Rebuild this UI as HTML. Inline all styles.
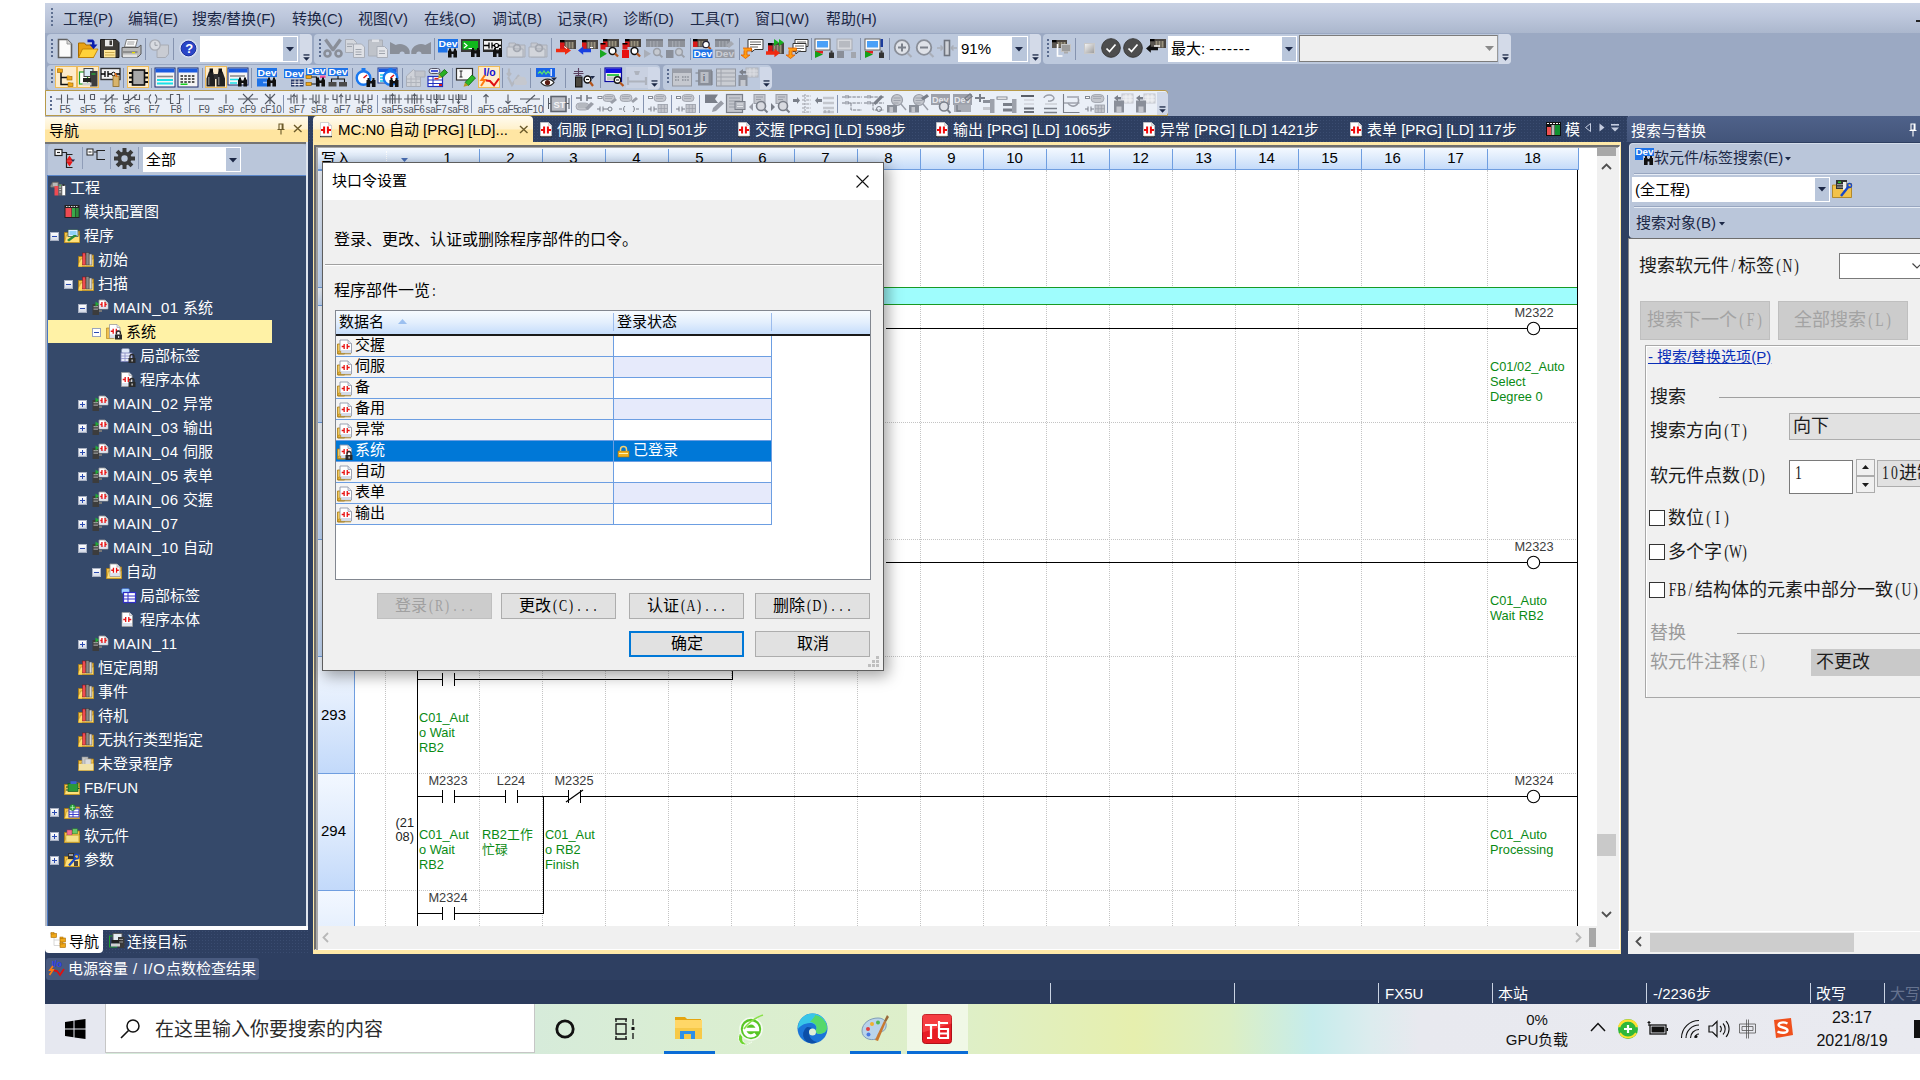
<!DOCTYPE html>
<html lang="zh-CN"><head><meta charset="utf-8"><title>GX Works3</title>
<style>
*{box-sizing:border-box;margin:0;padding:0}
html,body{width:1920px;height:1080px;overflow:hidden;background:#fff}
body{position:relative;font-family:"Liberation Sans",sans-serif;font-size:15px;color:#000}
div,svg,span.a{position:absolute}
svg{overflow:visible}
.sf{font-family:"Liberation Sans",serif;font-weight:300}
.sf .h{font-family:"Liberation Serif",serif}
.h{display:inline-flex;justify-content:center;transform:scaleX(.76)}
.ls{letter-spacing:.43px}
.tb{background:#bdc9dd;border-radius:4px}
.sep{background:#8e9cb8;width:1px}
</style></head>
<body>
<div style="left:45px;top:3px;width:1875px;height:1001px;background:#9ba9c3"></div>
<div style="left:45px;top:3px;width:1875px;height:30px;background:linear-gradient(#c9d2e4 0%,#bdc7dc 45%,#abb7cd 100%)"></div>
<div style="left:51px;top:8px;width:2px;height:2px;background:#5f7091"></div>
<div style="left:51px;top:12px;width:2px;height:2px;background:#5f7091"></div>
<div style="left:51px;top:16px;width:2px;height:2px;background:#5f7091"></div>
<div style="left:51px;top:20px;width:2px;height:2px;background:#5f7091"></div>
<div style="left:51px;top:24px;width:2px;height:2px;background:#5f7091"></div>
<div style="left:63px;top:9px;height:20px;line-height:20px;font-size:15px;color:#1c2846;white-space:nowrap;">工程(P)</div>
<div style="left:128px;top:9px;height:20px;line-height:20px;font-size:15px;color:#1c2846;white-space:nowrap;">编辑(E)</div>
<div style="left:192px;top:9px;height:20px;line-height:20px;font-size:15px;color:#1c2846;white-space:nowrap;">搜索/替换(F)</div>
<div style="left:292px;top:9px;height:20px;line-height:20px;font-size:15px;color:#1c2846;white-space:nowrap;">转换(C)</div>
<div style="left:358px;top:9px;height:20px;line-height:20px;font-size:15px;color:#1c2846;white-space:nowrap;">视图(V)</div>
<div style="left:424px;top:9px;height:20px;line-height:20px;font-size:15px;color:#1c2846;white-space:nowrap;">在线(O)</div>
<div style="left:492px;top:9px;height:20px;line-height:20px;font-size:15px;color:#1c2846;white-space:nowrap;">调试(B)</div>
<div style="left:557px;top:9px;height:20px;line-height:20px;font-size:15px;color:#1c2846;white-space:nowrap;">记录(R)</div>
<div style="left:623px;top:9px;height:20px;line-height:20px;font-size:15px;color:#1c2846;white-space:nowrap;">诊断(D)</div>
<div style="left:690px;top:9px;height:20px;line-height:20px;font-size:15px;color:#1c2846;white-space:nowrap;">工具(T)</div>
<div style="left:755px;top:9px;height:20px;line-height:20px;font-size:15px;color:#1c2846;white-space:nowrap;">窗口(W)</div>
<div style="left:826px;top:9px;height:20px;line-height:20px;font-size:15px;color:#1c2846;white-space:nowrap;">帮助(H)</div>
<div style="left:1916px;top:20px;width:4px;height:2px;background:#222"></div>
<div class="tb" style="left:47px;top:34px;width:265px;height:30px;"></div>
<div class="tb" style="left:314px;top:34px;width:727px;height:30px;"></div>
<div class="tb" style="left:1043px;top:34px;width:468px;height:30px;"></div>
<div style="left:51px;top:39px;width:2px;height:2px;background:#5a6b8e"></div>
<div style="left:51px;top:43px;width:2px;height:2px;background:#5a6b8e"></div>
<div style="left:51px;top:47px;width:2px;height:2px;background:#5a6b8e"></div>
<div style="left:51px;top:51px;width:2px;height:2px;background:#5a6b8e"></div>
<div style="left:51px;top:55px;width:2px;height:2px;background:#5a6b8e"></div>
<svg style="left:58px;top:39px;" width="14" height="19" viewBox="0 0 14 19"><path d="M0.5 0.5h8.5l4.5 4.5v13.5h-13z" fill="#fbfbfb" stroke="#5f5f5f" stroke-width="1.6" /><path d="M9 0.5v4.5h4.5" fill="#d8d8d8" stroke="#8a8a8a" stroke-width="0.8" /></svg>
<svg style="left:78px;top:39px;" width="21" height="19" viewBox="0 0 21 19"><path d="M0.5 4h6l1.5 2h7.5v12.5h-15z" fill="#e9a213" stroke="#a86a00" stroke-width="1" /><path d="M0.5 18.5l4-8.5h15.5l-4.5 8.5z" fill="#ffd23a" stroke="#b87800" stroke-width="0.8" /><path d="M9.5 0.5h5.5l1.5 2v3h3l-4 4.5l-4-4.5h2.5v-2.2h-4.5z" fill="#0a1fb0" stroke="none" stroke-width="1" /></svg>
<svg style="left:100px;top:39px;" width="20" height="19" viewBox="0 0 20 19"><path d="M0.5 0.5h15.5l3 3v15h-18.5z" fill="#3d3a36" stroke="#1a1a1a" stroke-width="1" /><rect x="5" y="0.8" width="8" height="6.5" fill="#e8e8e8" /><rect x="9.5" y="1.5" width="2.5" height="4.5" fill="#3d3a36" /><rect x="4" y="11" width="11.5" height="7.5" fill="#ffe79a" /><rect x="5" y="13" width="9.5" height="1" fill="#c9a94e" /><rect x="5" y="15.5" width="9.5" height="1" fill="#c9a94e" /></svg>
<svg style="left:121px;top:39px;" width="22" height="19" viewBox="0 0 22 19"><path d="M5.5 0.5h11l-2 7.5h-11z" fill="#fafafa" stroke="#777" stroke-width="1" /><path d="M6.5 3h7M6 5h7" fill="none" stroke="#888" stroke-width="0.8" /><path d="M1 8.5h16l3-2.5v9l-3 3h-16z" fill="#b9b9b9" stroke="#5a5a5a" stroke-width="1" /><rect x="1.5" y="12" width="15" height="2" fill="#8e8e8e" /><rect x="2" y="15.5" width="14" height="2.5" fill="#e2e2e2" /><rect x="11" y="13" width="3" height="1.3" fill="#e6e000" /></svg>
<div style="left:145px;top:38px;width:1px;height:22px;background:#8593af"></div>
<svg style="left:149px;top:39px;" width="21" height="19" viewBox="0 0 21 19"><path d="M8 6h11.5v9l-3 3.5h-8.5z" fill="#c9ccd3" stroke="#a7abb4" stroke-width="1" /><circle cx="6" cy="6" r="5.2" fill="#d8dbe1" stroke="#a7abb4" stroke-width="1.3"/><path d="M6 3v3.3h2.6" fill="none" stroke="#9a9ea7" stroke-width="1" /></svg>
<div style="left:173px;top:38px;width:1px;height:22px;background:#8593af"></div>
<svg style="left:179px;top:39px;" width="19" height="19" viewBox="0 0 19 19"><circle cx="9.5" cy="9.5" r="9" fill="#e9eef8" stroke="#cfd8ea" stroke-width="1"/><circle cx="9.5" cy="9.5" r="7.4" fill="#2a45c8" stroke="#1a2f9a" stroke-width="1"/><text x="6.2" y="14.2" font-family="Liberation Sans,sans-serif" font-size="13" fill="#fff" font-weight="bold">?</text></svg>
<div style="left:200px;top:36px;width:98px;height:26px;background:#fff"></div>
<div style="left:283px;top:37px;width:14px;height:24px;background:#b9c6db"></div>
<svg style="left:286px;top:47px;" width="8" height="5" viewBox="0 0 8 5"><path d="M0 0h8l-4 4.6z" fill="#1c2846" stroke="none" stroke-width="1" /></svg>
<div style="left:300px;top:34px;width:12px;height:30px;background:#d3dae8;border-radius:0 4px 4px 0"></div>
<svg style="left:302px;top:54px;" width="9" height="8" viewBox="0 0 9 8"><rect x="1.5" y="0.3" width="6" height="1.3" fill="#1c2846" /><path d="M1.2 3.2h6.600l-3.300 3.600z" fill="#1c2846" stroke="none" stroke-width="1" /></svg>
<div style="left:319px;top:39px;width:2px;height:2px;background:#5a6b8e"></div>
<div style="left:319px;top:43px;width:2px;height:2px;background:#5a6b8e"></div>
<div style="left:319px;top:47px;width:2px;height:2px;background:#5a6b8e"></div>
<div style="left:319px;top:51px;width:2px;height:2px;background:#5a6b8e"></div>
<div style="left:319px;top:55px;width:2px;height:2px;background:#5a6b8e"></div>
<svg style="left:323px;top:39px;" width="20" height="19" viewBox="0 0 20 19"><path d="M2.500 0.500l8 11M17.500 0.500l-8 11" fill="none" stroke="#8a8f99" stroke-width="3.4" /><circle cx="4.5" cy="14.5" r="3" fill="none" stroke="#8a8f99" stroke-width="2.6"/><circle cx="15.5" cy="14.5" r="3" fill="none" stroke="#8a8f99" stroke-width="2.6"/></svg>
<svg style="left:345px;top:39px;" width="21" height="19" viewBox="0 0 21 19"><path d="M0.5 0.5h8l3 3v10h-11z" fill="#d4d7dd" stroke="#a9aeb8" stroke-width="1" /><path d="M8.5 5h8l3 3v10.5h-11z" fill="#dfe1e6" stroke="#a9aeb8" stroke-width="1" /><path d="M2 5h6M2 7.5h5M10.5 10.5h6M10.5 13h6M10.5 15.5h6" fill="none" stroke="#9fa4ad" stroke-width="1" /></svg>
<svg style="left:368px;top:39px;" width="21" height="19" viewBox="0 0 21 19"><path d="M0.5 1h14v16h-14z" fill="#bfc3ca" stroke="#a9aeb8" stroke-width="1" /><rect x="4" y="0.5" width="7" height="2.5" fill="#e0e2e7" /><path d="M9 7.5h7.5l3 3v8h-10.5z" fill="#e2e4e9" stroke="#a9aeb8" stroke-width="1" /><path d="M11 12h6M11 14.5h6" fill="none" stroke="#9fa4ad" stroke-width="1" /></svg>
<svg style="left:390px;top:39px;" width="20" height="19" viewBox="0 0 20 19"><path d="M0 3l0 12h9.5a2.6 2.6 0 0 1 5.2 0h5v-3a10 9 0 0 0 -14 -6z" fill="#8a8f99" stroke="none" stroke-width="1" /></svg>
<svg style="left:411px;top:39px;" width="20" height="19" viewBox="0 0 20 19"><path d="M20 3l0 12h-9.5a2.6 2.6 0 0 0 -5.2 0h-5v-3a10 9 0 0 1 14 -6z" fill="#8a8f99" stroke="none" stroke-width="1" /></svg>
<div style="left:434px;top:38px;width:1px;height:22px;background:#8593af"></div>
<svg style="left:438px;top:39px;" width="21" height="19" viewBox="0 0 21 19"><rect x="0" y="0" width="20" height="9" fill="#1e73e8" /><text x="0.5" y="7.5" font-family="Liberation Sans,sans-serif" font-size="8.5" fill="#fff" font-weight="bold" textLength="19" lengthAdjust="spacingAndGlyphs">Dev</text><rect x="0" y="9" width="9.5" height="4.5" fill="#1e73e8" /><rect x="10" y="11.5" width="3.6" height="7" fill="#111" /><rect x="15.4" y="11.5" width="3.6" height="7" fill="#111" /><rect x="11" y="9.5" width="2" height="3" fill="#111" /><rect x="16" y="9.5" width="2" height="3" fill="#111" /><rect x="13" y="12.5" width="3" height="2.5" fill="#111" /></svg>
<svg style="left:461px;top:39px;" width="21" height="19" viewBox="0 0 21 19"><rect x="0" y="0" width="19" height="13" fill="#3a3a3a" /><rect x="1.5" y="2" width="15.5" height="8.5" fill="#10b81c" /><path d="M3 4l3 2.5l-3 2.5M7.5 9.5h4" fill="none" stroke="#fff" stroke-width="1.2" /><rect x="10" y="11" width="3.6" height="7" fill="#111" /><rect x="15.4" y="11" width="3.6" height="7" fill="#111" /><rect x="11" y="9" width="2" height="3" fill="#111" /><rect x="16" y="9" width="2" height="3" fill="#111" /><rect x="13" y="12" width="3" height="2.5" fill="#111" /></svg>
<svg style="left:483px;top:39px;" width="21" height="19" viewBox="0 0 21 19"><rect x="0" y="0" width="19" height="13" fill="#2a2a2a" /><rect x="1" y="2" width="17" height="8.5" fill="#f2f2f2" /><path d="M1 6.5h5M6 3.5v6M9 3.5v6M9 6.5h3M16 6.5h2" fill="none" stroke="#000" stroke-width="1.3" /><circle cx="13.5" cy="6.5" r="2" fill="#fff" stroke="#000" stroke-width="1.2"/><rect x="10" y="11" width="3.6" height="7" fill="#111" /><rect x="15.4" y="11" width="3.6" height="7" fill="#111" /><rect x="11" y="9" width="2" height="3" fill="#111" /><rect x="16" y="9" width="2" height="3" fill="#111" /><rect x="13" y="12" width="3" height="2.5" fill="#111" /></svg>
<svg style="left:506px;top:39px;" width="21" height="19" viewBox="0 0 21 19"><path d="M3 4h6l2 2h8v12h-16z" fill="#c6c9d0" stroke="#a9aeb8" stroke-width="1" /><path d="M1 8h6l2 2h8v8h-16z" fill="#d2d5db" stroke="#a9aeb8" stroke-width="1" /><circle cx="11" cy="9" r="3.4" fill="none" stroke="#a3a7b0" stroke-width="1.8"/></svg>
<svg style="left:528px;top:39px;" width="21" height="19" viewBox="0 0 21 19"><path d="M3 4h6l2 2h8v12h-16z" fill="#c6c9d0" stroke="#a9aeb8" stroke-width="1" /><path d="M1 8h6l2 2h8v8h-16z" fill="#d2d5db" stroke="#a9aeb8" stroke-width="1" /><circle cx="11" cy="9" r="3.4" fill="none" stroke="#a3a7b0" stroke-width="1.8"/></svg>
<div style="left:551px;top:38px;width:1px;height:22px;background:#8593af"></div>
<svg style="left:556px;top:39px;" width="21" height="19" viewBox="0 0 21 19"><rect x="4" y="1" width="16" height="9" fill="#4a4540" /><rect x="4" y="1" width="4.5" height="2.5" fill="#000" /><rect x="4" y="3.5" width="4.5" height="6.5" fill="#d81818" /><rect x="9.5" y="3" width="2" height="6.5" fill="#9a937f" /><rect x="12.5" y="3" width="2" height="6.5" fill="#9a937f" /><rect x="15.5" y="3" width="2" height="6.5" fill="#9a937f" /><path d="M0 9.74h9.0v-2.4l6.0 4.16l-6.0 4.16v-2.4h-9.0z" fill="#f02a10" stroke="none" stroke-width="1" /><path d="M8 7.5l3 2.2" fill="none" stroke="#fff" stroke-width="1" /></svg>
<svg style="left:578px;top:39px;" width="21" height="19" viewBox="0 0 21 19"><rect x="4" y="1" width="16" height="9" fill="#4a4540" /><rect x="4" y="1" width="4.5" height="2.5" fill="#000" /><rect x="4" y="3.5" width="4.5" height="6.5" fill="#d81818" /><rect x="9.5" y="3" width="2" height="6.5" fill="#9a937f" /><rect x="12.5" y="3" width="2" height="6.5" fill="#9a937f" /><rect x="15.5" y="3" width="2" height="6.5" fill="#9a937f" /><path d="M13 9.74h-7.8v-2.4l-5.2 4.16l5.2 4.16v-2.4h7.8z" fill="#1840e0" stroke="none" stroke-width="1" /><path d="M12 8.5h3" fill="none" stroke="#fff" stroke-width="1" /></svg>
<svg style="left:600px;top:39px;" width="21" height="19" viewBox="0 0 21 19"><rect x="3" y="0" width="16" height="8" fill="#4a4540" /><rect x="3" y="0" width="4.5" height="2.5" fill="#000" /><rect x="3" y="2.5" width="4.5" height="5.5" fill="#d81818" /><rect x="8.5" y="2" width="2" height="5.5" fill="#9a937f" /><rect x="11.5" y="2" width="2" height="5.5" fill="#9a937f" /><rect x="14.5" y="2" width="2" height="5.5" fill="#9a937f" /><rect x="0.5" y="4.5" width="5" height="6" fill="#d81818" /><rect x="0.5" y="4" width="5" height="1.5" fill="#000" /><path d="M0 10.5v8.5l7-4.2z" fill="#18a820" stroke="none" stroke-width="1" /><circle cx="12.5" cy="12" r="3.4" fill="#fff" stroke="#111" stroke-width="1.5"/><path d="M14.879999999999999 14.379999999999999l3.2 3.2" fill="none" stroke="#b4551c" stroke-width="2.2" /></svg>
<svg style="left:622px;top:39px;" width="21" height="19" viewBox="0 0 21 19"><rect x="3" y="0" width="16" height="8" fill="#4a4540" /><rect x="3" y="0" width="4.5" height="2.5" fill="#000" /><rect x="3" y="2.5" width="4.5" height="5.5" fill="#d81818" /><rect x="8.5" y="2" width="2" height="5.5" fill="#9a937f" /><rect x="11.5" y="2" width="2" height="5.5" fill="#9a937f" /><rect x="14.5" y="2" width="2" height="5.5" fill="#9a937f" /><rect x="0.5" y="4.5" width="5" height="6" fill="#d81818" /><rect x="0.5" y="4" width="5" height="1.5" fill="#000" /><rect x="0" y="11" width="7" height="8" fill="#e81010" /><circle cx="12.5" cy="12" r="3.4" fill="#fff" stroke="#111" stroke-width="1.5"/><path d="M14.879999999999999 14.379999999999999l3.2 3.2" fill="none" stroke="#b4551c" stroke-width="2.2" /></svg>
<svg style="left:644px;top:39px;" width="21" height="19" viewBox="0 0 21 19"><rect x="2" y="0" width="17" height="8" fill="#8d9199" /><rect x="2" y="0" width="17" height="2" fill="#7b7f88" /><rect x="6.0" y="2" width="1.2" height="6" fill="#a4a8b0" /><rect x="9.3" y="2" width="1.2" height="6" fill="#a4a8b0" /><rect x="12.6" y="2" width="1.2" height="6" fill="#a4a8b0" /><path d="M0 10.5v8.5l7-4.2z" fill="#a9aeb8" stroke="none" stroke-width="1" /><circle cx="13" cy="13" r="3.4" fill="#c5c9d0" stroke="#9a9fa8" stroke-width="1.5"/><path d="M15.379999999999999 15.379999999999999l3 3" fill="none" stroke="#9a9fa8" stroke-width="2" /></svg>
<svg style="left:666px;top:39px;" width="21" height="19" viewBox="0 0 21 19"><rect x="2" y="0" width="17" height="8" fill="#8d9199" /><rect x="2" y="0" width="17" height="2" fill="#7b7f88" /><rect x="6.0" y="2" width="1.2" height="6" fill="#a4a8b0" /><rect x="9.3" y="2" width="1.2" height="6" fill="#a4a8b0" /><rect x="12.6" y="2" width="1.2" height="6" fill="#a4a8b0" /><rect x="0" y="11" width="7.5" height="8" fill="#8a8f99" /><circle cx="13" cy="13" r="3.4" fill="#c5c9d0" stroke="#9a9fa8" stroke-width="1.5"/><path d="M15.379999999999999 15.379999999999999l3 3" fill="none" stroke="#9a9fa8" stroke-width="2" /></svg>
<div style="left:690px;top:38px;width:1px;height:22px;background:#8593af"></div>
<svg style="left:693px;top:39px;" width="21" height="19" viewBox="0 0 21 19"><rect x="0" y="0" width="15" height="8" fill="#4a4540" /><rect x="0" y="0" width="4.5" height="2.5" fill="#000" /><rect x="0" y="2.5" width="4.5" height="5.5" fill="#d81818" /><rect x="5.5" y="2" width="2" height="5.5" fill="#9a937f" /><rect x="8.5" y="2" width="2" height="5.5" fill="#9a937f" /><rect x="11.5" y="2" width="2" height="5.5" fill="#9a937f" /><circle cx="13" cy="5.5" r="3.2" fill="#fff" stroke="#223" stroke-width="1.3"/><path d="M15.3 8l2.5 2" fill="none" stroke="#b4551c" stroke-width="2" /><rect x="0" y="10.5" width="19.5" height="8.5" fill="#1e73e8" /><text x="0.5" y="17.5" font-family="Liberation Sans,sans-serif" font-size="8.5" fill="#fff" font-weight="bold" textLength="18.5" lengthAdjust="spacingAndGlyphs">Dev</text></svg>
<svg style="left:715px;top:39px;" width="21" height="19" viewBox="0 0 21 19"><rect x="0" y="0" width="15" height="8" fill="#8d9199" /><rect x="0" y="0" width="15" height="2" fill="#7b7f88" /><rect x="4.0" y="2" width="1.2" height="6" fill="#a4a8b0" /><rect x="7.3" y="2" width="1.2" height="6" fill="#a4a8b0" /><rect x="10.6" y="2" width="1.2" height="6" fill="#a4a8b0" /><path d="M11 6l5-4l3 3l-5 4z" fill="#a5a9b2" stroke="none" stroke-width="1" /><rect x="0" y="10.5" width="19.5" height="8.5" fill="#9599a3" /><text x="0.5" y="17.5" font-family="Liberation Sans,sans-serif" font-size="8.5" fill="#c9ccd3" font-weight="bold" textLength="18.5" lengthAdjust="spacingAndGlyphs">Dev</text></svg>
<div style="left:739px;top:38px;width:1px;height:22px;background:#8593af"></div>
<svg style="left:743px;top:39px;" width="21" height="19" viewBox="0 0 21 19"><path d="M5 0.5h15v10h-8.25l-3 2.5v-2.5h-3.75z" fill="#fff" stroke="#333" stroke-width="1" /><path d="M7 3.0h11M7 5.5h11M7 8.0h8" fill="none" stroke="#555" stroke-width="0.9" /><path d="M0 9h8.5v3h-4.5v4h3l-4.5 3.5l-4.5-3.5h3v-4.5" fill="#ff9c10" stroke="#e05a00" stroke-width="0.8" /></svg>
<svg style="left:766px;top:39px;" width="21" height="19" viewBox="0 0 21 19"><rect x="2" y="4" width="16" height="11" fill="#4a4540" /><rect x="2" y="4" width="4.5" height="2.5" fill="#000" /><rect x="2" y="6.5" width="4.5" height="8.5" fill="#d81818" /><rect x="7.5" y="6" width="2" height="8.5" fill="#9a937f" /><rect x="10.5" y="6" width="2" height="8.5" fill="#9a937f" /><rect x="13.5" y="6" width="2" height="8.5" fill="#9a937f" /><path d="M8 0v7l5-3.5zM13 0v7l5-3.5z" fill="#18b020" stroke="none" stroke-width="1" /><path d="M0 12.24h8.4v-2.4l5.6000000000000005 4.16l-5.6000000000000005 4.16v-2.4h-8.4z" fill="#f02a10" stroke="none" stroke-width="1" /></svg>
<svg style="left:788px;top:39px;" width="21" height="19" viewBox="0 0 21 19"><path d="M7 0.5h13v7h-7.15l-3 2.5v-2.5h-2.8500000000000005z" fill="#fff" stroke="#333" stroke-width="1" /><path d="M9 3.0h9M9 5.5h9M9 8.0h6" fill="none" stroke="#555" stroke-width="0.9" /><path d="M5 4.5h13v8h-7.15l-3 2.5v-2.5h-2.8500000000000005z" fill="#fff" stroke="#333" stroke-width="1" /><path d="M7 7.0h9M7 9.5h9M7 12.0h6" fill="none" stroke="#555" stroke-width="0.9" /><path d="M0 9h8.5v3h-4.5v4h3l-4.5 3.5l-4.5-3.5h3v-4.5" fill="#ff9c10" stroke="#e05a00" stroke-width="0.8" /></svg>
<div style="left:811px;top:38px;width:1px;height:22px;background:#8593af"></div>
<svg style="left:815px;top:39px;" width="21" height="19" viewBox="0 0 21 19"><rect x="0" y="0" width="15" height="11" fill="#fbfbfb" stroke="#666"/><rect x="2" y="2" width="11" height="6.5" fill="#4aa0f8" /><rect x="0" y="12" width="8" height="2.5" fill="#e02020" /><path d="M0 12v7l8-3.5z" fill="#12a018" stroke="none" stroke-width="1" /><rect x="14" y="13.5" width="5" height="5.5" fill="#333" /><rect x="15.5" y="11.5" width="2" height="2.5" fill="#444" /></svg>
<svg style="left:837px;top:39px;" width="21" height="19" viewBox="0 0 21 19"><rect x="0" y="0" width="15" height="11" fill="#d5d7dc" stroke="#a7abb4"/><rect x="2" y="2" width="11" height="6.5" fill="#b7bac1" /><rect x="0" y="12" width="7" height="7" fill="#8a8f99" /><rect x="14" y="13" width="5" height="6" fill="#a2a6ae" /></svg>
<div style="left:860px;top:38px;width:1px;height:22px;background:#8593af"></div>
<svg style="left:865px;top:39px;" width="21" height="19" viewBox="0 0 21 19"><rect x="0" y="0" width="15" height="11" fill="#fbfbfb" stroke="#666"/><rect x="2" y="2" width="11" height="6.5" fill="#4aa0f8" /><rect x="0" y="12" width="8" height="2.5" fill="#e02020" /><path d="M0 12v7l8-3.5z" fill="#12a018" stroke="none" stroke-width="1" /><rect x="14" y="13.5" width="5" height="5.5" fill="#333" /><rect x="15.5" y="11.5" width="2" height="2.5" fill="#444" /><rect x="15.5" y="0" width="2.5" height="8" fill="#1c3c9c" /></svg>
<div style="left:889px;top:38px;width:1px;height:22px;background:#8593af"></div>
<svg style="left:893px;top:39px;" width="21" height="19" viewBox="0 0 21 19"><circle cx="9" cy="8.5" r="7.3" fill="#dfe2e8" stroke="#8a8f99" stroke-width="1.8"/><path d="M5 8.5h8M9 4.5v8" fill="none" stroke="#7c818b" stroke-width="2" /><path d="M14.5 14l4 4" fill="none" stroke="#a9aeb8" stroke-width="2.2" /></svg>
<svg style="left:915px;top:39px;" width="21" height="19" viewBox="0 0 21 19"><circle cx="9" cy="8.5" r="7.3" fill="#dfe2e8" stroke="#8a8f99" stroke-width="1.8"/><path d="M5 8.5h8" fill="none" stroke="#7c818b" stroke-width="2" /><path d="M14.5 14l4 4" fill="none" stroke="#a9aeb8" stroke-width="2.2" /></svg>
<svg style="left:937px;top:39px;" width="21" height="19" viewBox="0 0 21 19"><rect x="7.5" y="1.5" width="5" height="15" fill="#cfd2d8" stroke="#70757f" stroke-width="1.6"/><path d="M0 9h6M3.5 6.5l2.5 2.5l-2.5 2.5M20 9h-6M16.5 6.5l-2.5 2.5l2.5 2.5" fill="none" stroke="#a9aeb8" stroke-width="1.6" /></svg>
<div style="left:958px;top:36px;width:70px;height:26px;background:#fff"></div>
<div style="left:1012px;top:37px;width:15px;height:24px;background:#b9c6db"></div>
<svg style="left:1015px;top:47px;" width="8" height="5" viewBox="0 0 8 5"><path d="M0 0h8l-4 4.6z" fill="#1c2846" stroke="none" stroke-width="1" /></svg>
<div style="left:961px;top:36px;height:26px;line-height:26px;font-size:15px;color:#000;white-space:nowrap;">91%</div>
<div style="left:1030px;top:34px;width:11px;height:30px;background:#d3dae8;border-radius:0 4px 4px 0"></div>
<svg style="left:1031px;top:54px;" width="9" height="8" viewBox="0 0 9 8"><rect x="1.5" y="0.3" width="6" height="1.3" fill="#1c2846" /><path d="M1.2 3.2h6.600l-3.300 3.600z" fill="#1c2846" stroke="none" stroke-width="1" /></svg>
<div style="left:1047px;top:39px;width:2px;height:2px;background:#5a6b8e"></div>
<div style="left:1047px;top:43px;width:2px;height:2px;background:#5a6b8e"></div>
<div style="left:1047px;top:47px;width:2px;height:2px;background:#5a6b8e"></div>
<div style="left:1047px;top:51px;width:2px;height:2px;background:#5a6b8e"></div>
<div style="left:1047px;top:55px;width:2px;height:2px;background:#5a6b8e"></div>
<svg style="left:1052px;top:39px;" width="21" height="19" viewBox="0 0 21 19"><rect x="0" y="1" width="15" height="8" fill="#4a4540" /><rect x="0" y="1" width="4.5" height="2.5" fill="#000" /><rect x="0" y="3.5" width="4.5" height="5.5" fill="#5a5650" /><rect x="5.5" y="3" width="2" height="5.5" fill="#9a937f" /><rect x="8.5" y="3" width="2" height="5.5" fill="#9a937f" /><rect x="11.5" y="3" width="2" height="5.5" fill="#9a937f" /><path d="M5.5 5v12h5" fill="none" stroke="#fff" stroke-width="1.6" /><rect x="9.5" y="5.5" width="9" height="7" fill="#9c9c9c" stroke="#c4c4c4"/><rect x="12" y="12.5" width="4" height="2" fill="#aaa" /></svg>
<div style="left:1075px;top:38px;width:1px;height:22px;background:#8593af"></div>
<div style="left:1084px;top:43px;width:11px;height:11px;background:linear-gradient(135deg,#f2f2f2,#9e9e9e);border:1px solid #c9c9c9"></div>
<svg style="left:1101px;top:38px;" width="20" height="20" viewBox="0 0 20 20"><circle cx="10" cy="10" r="9.3" fill="#4d4d4d" stroke="#3a3a3a" stroke-width="1"/><path d="M5.5 10.5l3 3l6-7" fill="none" stroke="#fff" stroke-width="1.7" /></svg>
<svg style="left:1123px;top:38px;" width="20" height="20" viewBox="0 0 20 20"><circle cx="10" cy="10" r="9.3" fill="#4d4d4d" stroke="#3a3a3a" stroke-width="1"/><path d="M5.5 10.5l3 3l6-7" fill="none" stroke="#fff" stroke-width="1.7" /></svg>
<svg style="left:1146px;top:39px;" width="21" height="19" viewBox="0 0 21 19"><rect x="4" y="0" width="16" height="9" fill="#4a4540" /><rect x="4" y="0" width="4.5" height="2.5" fill="#000" /><rect x="4" y="2.5" width="4.5" height="6.5" fill="#5a5650" /><rect x="9.5" y="2" width="2" height="6.5" fill="#9a937f" /><rect x="12.5" y="2" width="2" height="6.5" fill="#9a937f" /><rect x="15.5" y="2" width="2" height="6.5" fill="#9a937f" /><path d="M12 7.74h-7.199999999999999v-2.4l-4.800000000000001 4.16l4.800000000000001 4.16v-2.4h7.199999999999999z" fill="#111" stroke="none" stroke-width="1" /><path d="M8 7h6" fill="none" stroke="#fff" stroke-width="1.4" /></svg>
<div style="left:1168px;top:36px;width:129px;height:26px;background:#fff"></div>
<div style="left:1282px;top:37px;width:14px;height:24px;background:#b9c6db"></div>
<svg style="left:1285px;top:47px;" width="8" height="5" viewBox="0 0 8 5"><path d="M0 0h8l-4 4.6z" fill="#1c2846" stroke="none" stroke-width="1" /></svg>
<div style="left:1171px;top:36px;height:26px;line-height:26px;font-size:15px;color:#000;white-space:nowrap;">最大: <span style="letter-spacing:.9px">-------</span></div>
<div style="left:1299px;top:35px;width:199px;height:27px;background:#efefef;border:1px solid #7c7c7c;border-right-color:#9a9a9a"></div>
<svg style="left:1485px;top:46px;" width="9" height="5" viewBox="0 0 9 5"><path d="M0 0h9l-4.5 5z" fill="#8a8a8a" stroke="none" stroke-width="1" /></svg>
<div style="left:1499px;top:34px;width:12px;height:30px;background:#d3dae8;border-radius:0 4px 4px 0"></div>
<svg style="left:1501px;top:54px;" width="9" height="8" viewBox="0 0 9 8"><rect x="1.5" y="0.3" width="6" height="1.3" fill="#1c2846" /><path d="M1.2 3.2h6.600l-3.300 3.600z" fill="#1c2846" stroke="none" stroke-width="1" /></svg>
<div class="tb" style="left:47px;top:65px;width:613px;height:25px;"></div>
<div class="tb" style="left:663px;top:65px;width:108px;height:25px;"></div>
<div style="left:51px;top:69px;width:2px;height:2px;background:#5a6b8e"></div>
<div style="left:51px;top:73px;width:2px;height:2px;background:#5a6b8e"></div>
<div style="left:51px;top:77px;width:2px;height:2px;background:#5a6b8e"></div>
<div style="left:51px;top:81px;width:2px;height:2px;background:#5a6b8e"></div>
<div style="left:55px;top:66px;width:22px;height:22px;background:#fdeccb;border:1px solid #efbc5a"></div>
<div style="left:77px;top:66px;width:22px;height:22px;background:#fdeccb;border:1px solid #efbc5a"></div>
<div style="left:127px;top:66px;width:22px;height:22px;background:#fdeccb;border:1px solid #efbc5a"></div>
<div style="left:205px;top:66px;width:22px;height:22px;background:#fdeccb;border:1px solid #efbc5a"></div>
<div style="left:478px;top:66px;width:22px;height:22px;background:#fdeccb;border:1px solid #efbc5a"></div>
<svg style="left:57px;top:68px;" width="19" height="19" viewBox="0 0 19 19"><path d="M4 4v12.5h7M4 9.5h6" fill="none" stroke="#111" stroke-width="1.5" /><rect x="0.5" y="1" width="5" height="3.5" fill="#f0a818" stroke="#9a6200" stroke-width="0.6"/><rect x="0.5" y="0" width="2.5" height="1.5" fill="#f0a818" /><rect x="10" y="8.5" width="5" height="3.5" fill="#f0a818" stroke="#9a6200" stroke-width="0.6"/><rect x="10" y="7.5" width="2.5" height="1.5" fill="#f0a818" /><rect x="11" y="15" width="5" height="3.5" fill="#f0a818" stroke="#9a6200" stroke-width="0.6"/><rect x="11" y="14" width="2.5" height="1.5" fill="#f0a818" /></svg>
<svg style="left:79px;top:68px;" width="19" height="19" viewBox="0 0 19 19"><rect x="0.5" y="4" width="8" height="12" fill="#fff" stroke="#20a030" stroke-width="1.2"/><rect x="5" y="0.5" width="9" height="8" fill="#d8e8f8" stroke="#444"/><rect x="11" y="3" width="7.5" height="15.5" fill="#3c3c3c" /><rect x="4" y="10" width="8" height="4" fill="#222" /><rect x="3.5" y="14.5" width="9" height="3" fill="#cfcfcf" /><rect x="12.5" y="5.5" width="4" height="1" fill="#21d03a" /></svg>
<svg style="left:101px;top:68px;" width="20" height="19" viewBox="0 0 20 19"><rect x="0" y="0.5" width="19" height="11" fill="#f4f4f4" stroke="#333" stroke-width="1.4"/><path d="M0 6h4M4 3v6M7 3v6M7 6h4M15 6h4" fill="none" stroke="#000" stroke-width="1.3" /><circle cx="12.5" cy="6" r="1.8" fill="#fff" stroke="#000" stroke-width="1"/><rect x="12" y="8" width="6" height="10.5" fill="#d8b46c" stroke="#8a6a2a" stroke-width="0.8"/><path d="M14 5l2 4" fill="none" stroke="#f07010" stroke-width="1.6" /></svg>
<div style="left:123px;top:68px;width:1px;height:20px;background:#8593af"></div>
<svg style="left:129px;top:68px;" width="19" height="19" viewBox="0 0 19 19"><rect x="3.5" y="2" width="12" height="15" fill="#a8a8a8" stroke="#111" stroke-width="1.6"/><path d="M0 5h3.5M0 9.5h3.5M0 14h3.5M15.5 5h3.5M15.5 9.5h3.5M15.5 14h3.5" fill="none" stroke="#111" stroke-width="1.8" /></svg>
<div style="left:151px;top:68px;width:1px;height:20px;background:#8593af"></div>
<svg style="left:155px;top:68px;" width="21" height="19" viewBox="0 0 21 19"><rect x="0" y="0" width="20" height="19" fill="#f4f4f4" stroke="#1c2c6c" stroke-width="1"/><rect x="0.5" y="0.5" width="19" height="4" fill="#1a5ae0" /><path d="M2 8.5h16" fill="none" stroke="#888" stroke-width="1.6" /><path d="M2 12h16M2 15.5h16" fill="none" stroke="#19e0e8" stroke-width="1.8" /></svg>
<svg style="left:178px;top:68px;" width="21" height="19" viewBox="0 0 21 19"><rect x="0" y="0" width="20" height="19" fill="#f4f4f4" stroke="#1c2c6c" stroke-width="1"/><rect x="0.5" y="0.5" width="19" height="4" fill="#1a5ae0" /><path d="M2.5 8h15M2.5 11h15M2.5 14h15" fill="none" stroke="#222" stroke-width="1.6" stroke-dasharray="2.5 1.3"/><rect x="2.5" y="15.5" width="7" height="1.5" fill="#19d020" /></svg>
<div style="left:202px;top:68px;width:1px;height:20px;background:#8593af"></div>
<svg style="left:206px;top:68px;" width="20" height="19" viewBox="0 0 20 19"><path d="M0.5 18.5v-8l2.5-7h4l2 7v8zM10.5 18.5v-8l2-7h4l2.5 7v8z" fill="#222" stroke="none" stroke-width="1" /><rect x="3.5" y="0.5" width="3.5" height="4" fill="#111" /><rect x="12.5" y="0.5" width="3.5" height="4" fill="#111" /><rect x="8" y="6" width="4" height="5" fill="#333" /><rect x="2" y="9" width="1.5" height="8" fill="#777" /><rect x="12" y="9" width="1.5" height="8" fill="#777" /></svg>
<svg style="left:228px;top:68px;" width="21" height="19" viewBox="0 0 21 19"><rect x="0" y="0" width="20" height="17" fill="#f4f4f4" stroke="#1c2c6c" stroke-width="1"/><rect x="0.5" y="0.5" width="19" height="4" fill="#1a5ae0" /><path d="M2 8h15" fill="none" stroke="#888" stroke-width="1.5" /><path d="M2 11.5h9M2 15h7" fill="none" stroke="#19e0e8" stroke-width="1.6" /><rect x="10" y="11.5" width="3.6" height="7" fill="#111" /><rect x="15.4" y="11.5" width="3.6" height="7" fill="#111" /><rect x="11" y="9.5" width="2" height="3" fill="#111" /><rect x="16" y="9.5" width="2" height="3" fill="#111" /><rect x="13" y="12.5" width="3" height="2.5" fill="#111" /></svg>
<div style="left:251px;top:68px;width:1px;height:20px;background:#8593af"></div>
<svg style="left:257px;top:68px;" width="24" height="19" viewBox="0 0 24 19"><rect x="0" y="0" width="20" height="9" fill="#1e73e8" /><text x="0.5" y="7.5" font-family="Liberation Sans,sans-serif" font-size="8.5" fill="#fff" font-weight="bold" textLength="19" lengthAdjust="spacingAndGlyphs">Dev</text><rect x="0" y="10.5" width="11" height="8" fill="#1e73e8" /><path d="M6 14.5h6l-2-2m2 2l-2 2" fill="none" stroke="#9cc4ff" stroke-width="1.4" /><rect x="10" y="11.5" width="3.6" height="7" fill="#111" /><rect x="15.4" y="11.5" width="3.6" height="7" fill="#111" /><rect x="11" y="9.5" width="2" height="3" fill="#111" /><rect x="16" y="9.5" width="2" height="3" fill="#111" /><rect x="13" y="12.5" width="3" height="2.5" fill="#111" /></svg>
<svg style="left:284px;top:68px;" width="21" height="19" viewBox="0 0 21 19"><rect x="0" y="1" width="20" height="9" fill="#1e73e8" /><text x="0.5" y="8.5" font-family="Liberation Sans,sans-serif" font-size="8.5" fill="#fff" font-weight="bold" textLength="19" lengthAdjust="spacingAndGlyphs">Dev</text><rect x="7" y="11.5" width="12.5" height="7" fill="#2a3a6a" /><path d="M7.5 14h11.5M7.5 16.5h11.5M11 11.5v7M15 11.5v7" fill="none" stroke="#fff" stroke-width="0.9" /></svg>
<svg style="left:306px;top:68px;" width="21" height="19" viewBox="0 0 21 19"><rect x="0" y="0" width="20" height="7" fill="#1e73e8" /><text x="0.5" y="5.5" font-family="Liberation Sans,sans-serif" font-size="8.5" fill="#fff" font-weight="bold" textLength="19" lengthAdjust="spacingAndGlyphs">Dev</text><rect x="0" y="7.5" width="5.5" height="3" fill="#f0a818" stroke="#8a5a00" stroke-width="0.6"/><rect x="0" y="14.5" width="5.5" height="3" fill="#f0a818" stroke="#8a5a00" stroke-width="0.6"/><rect x="14" y="7.5" width="5.5" height="2.5" fill="#f050a0" /><path d="M5.5 9h5v7h-5" fill="none" stroke="#111" stroke-width="1.2" /><rect x="10" y="11.5" width="3.6" height="7" fill="#111" /><rect x="15.4" y="11.5" width="3.6" height="7" fill="#111" /><rect x="11" y="9.5" width="2" height="3" fill="#111" /><rect x="16" y="9.5" width="2" height="3" fill="#111" /><rect x="13" y="12.5" width="3" height="2.5" fill="#111" /></svg>
<svg style="left:328px;top:68px;" width="21" height="19" viewBox="0 0 21 19"><rect x="0" y="0" width="20" height="8" fill="#1e73e8" /><text x="0.5" y="6.5" font-family="Liberation Sans,sans-serif" font-size="8.5" fill="#fff" font-weight="bold" textLength="19" lengthAdjust="spacingAndGlyphs">Dev</text><path d="M10 8v3M3.5 14v-3h13v3" fill="none" stroke="#111" stroke-width="1.1" /><rect x="0.5" y="14" width="8" height="4.5" fill="#4a4a4a" /><rect x="11" y="14" width="8" height="4.5" fill="#4a4a4a" /></svg>
<div style="left:352px;top:68px;width:1px;height:20px;background:#8593af"></div>
<svg style="left:356px;top:68px;" width="22" height="19" viewBox="0 0 22 19"><circle cx="7.5" cy="10" r="6.8" fill="#fff" stroke="#1878f0" stroke-width="2.4"/><rect x="5.5" y="0" width="4" height="3" fill="#1878f0" /><path d="M7.5 10l3.5-3" fill="none" stroke="#e01010" stroke-width="1.5" /><rect x="10.5" y="12" width="3.6" height="7" fill="#111" /><rect x="15.9" y="12" width="3.6" height="7" fill="#111" /><rect x="11.5" y="10" width="2" height="3" fill="#111" /><rect x="16.5" y="10" width="2" height="3" fill="#111" /><rect x="13.5" y="13" width="3" height="2.5" fill="#111" /></svg>
<svg style="left:378px;top:68px;" width="22" height="19" viewBox="0 0 22 19"><rect x="0" y="0" width="19" height="15" fill="#f4f8ff" stroke="#223a8a"/><rect x="0.5" y="0.5" width="18" height="3.5" fill="#1a5ae0" /><path d="M2 7h4M2 10h4M2 13h4" fill="none" stroke="#19c8e8" stroke-width="1.5" /><circle cx="12.5" cy="10" r="6.8" fill="#fff" stroke="#1878f0" stroke-width="2.4"/><rect x="10.5" y="0" width="4" height="3" fill="#1878f0" /><path d="M12.5 10l3.5-3" fill="none" stroke="#e01010" stroke-width="1.5" /><rect x="11.5" y="12" width="3.6" height="7" fill="#111" /><rect x="16.9" y="12" width="3.6" height="7" fill="#111" /><rect x="12.5" y="10" width="2" height="3" fill="#111" /><rect x="17.5" y="10" width="2" height="3" fill="#111" /><rect x="14.5" y="13" width="3" height="2.5" fill="#111" /></svg>
<div style="left:402px;top:68px;width:1px;height:20px;background:#8593af"></div>
<svg style="left:406px;top:68px;" width="21" height="19" viewBox="0 0 21 19"><path d="M0.5 8l7-6.5l7 6.5v10.5h-14z" fill="#cfd2d8" stroke="#a9aeb8" stroke-width="1" /><path d="M9 3h10v6h-10z" fill="#c2c5cc" stroke="#a9aeb8" stroke-width="1" /><path d="M1 11h13M1 14.5h13M5 8v10M10 8v10" fill="none" stroke="#b0b4bc" stroke-width="1" /></svg>
<svg style="left:428px;top:68px;" width="21" height="19" viewBox="0 0 21 19"><rect x="1" y="0.5" width="11" height="5" fill="#e8ecf8" stroke="#556" rx="2.5"/><path d="M3 3h7" fill="none" stroke="#1830d0" stroke-width="1.6" /><rect x="0" y="8.5" width="14.5" height="10" fill="#fff" stroke="#2030c0" stroke-width="1.2"/><path d="M0 12h14.5M0 15.5h14.5M5 8.5v10" fill="none" stroke="#2030c0" stroke-width="1" /><rect x="6.5" y="10" width="4" height="1.5" fill="#e02020" /><rect x="11" y="16" width="3" height="2" fill="#e02020" /><path d="M11 6.5l5.5-5l3 3l-5.5 5z" fill="#28b020" stroke="#106010" stroke-width="0.8" /><path d="M11 6.5l3 3l-4 1z" fill="#c8a020" stroke="none" stroke-width="1" /></svg>
<div style="left:452px;top:68px;width:1px;height:20px;background:#8593af"></div>
<svg style="left:456px;top:68px;" width="21" height="19" viewBox="0 0 21 19"><rect x="0.5" y="0.5" width="16" height="11.5" fill="#fafafa" stroke="#333" stroke-width="1.2"/><path d="M3.5 3h3M5 3v6M3.5 9h3" fill="none" stroke="#222" stroke-width="1" /><path d="M9 14.5l7-7.5l3.5 3l-7 7.5z" fill="#2cb828" stroke="#0e6a10" stroke-width="0.8" /><path d="M9 14.5l3.5 3l-5 1.2z" fill="#b89a20" stroke="none" stroke-width="1" /></svg>
<svg style="left:480px;top:67px;" width="19" height="21" viewBox="0 0 19 21"><text x="3.5" y="8.5" font-family="Liberation Sans,sans-serif" font-size="10.5" fill="#1010d0" font-weight="bold" font-family="Liberation Serif,serif">I/o</text><path d="M5 8l-3.5 5h3.5l-4 6" fill="none" stroke="#ff7a10" stroke-width="2" /><path d="M6 13.5l4 0.5l4 4.5l5-7" fill="none" stroke="#e01010" stroke-width="2" /></svg>
<div style="left:502px;top:68px;width:1px;height:20px;background:#8593af"></div>
<svg style="left:506px;top:68px;" width="21" height="19" viewBox="0 0 21 19"><path d="M3 0.5v7M1 5l2 2.5l2-2.5M2 9l4 8l7-10" fill="none" stroke="#b4b8c0" stroke-width="2.2" /><path d="M11 11a3 3 0 0 1 5-2a3 3 0 0 1 4 3.5a2.5 2.5 0 0 1-2 4.5h-7a3 3 0 0 1 0-6z" fill="#c5c8cf" stroke="none" stroke-width="1" /></svg>
<div style="left:530px;top:68px;width:1px;height:20px;background:#8593af"></div>
<svg style="left:535px;top:68px;" width="24" height="19" viewBox="0 0 24 19"><rect x="1" y="0" width="19" height="9" fill="#1a63e8" /><path d="M3 5.5l2-2l2 2.5l2-3l2 3l2-2.5l2 2" fill="none" stroke="#58e070" stroke-width="1.3" /><rect x="15.5" y="1" width="1.3" height="7" fill="#fff" /><path d="M16 9.5h6l-3 3.5z" fill="#1c2846" stroke="none" stroke-width="1" /><path d="M6 14.5c3-4.5 10-4.5 13 0c-3 4.5-10 4.5-13 0z" fill="#fff" stroke="#222" stroke-width="1.2" /><circle cx="12.5" cy="14.5" r="2.6" fill="#5a1a10" stroke="none" stroke-width="1"/></svg>
<div style="left:565px;top:68px;width:1px;height:20px;background:#8593af"></div>
<svg style="left:573px;top:68px;" width="24" height="19" viewBox="0 0 24 19"><path d="M5.5 0v8M1 3.5h9M0.5 5.5h10M2.5 7.5h6" fill="none" stroke="#5a4060" stroke-width="1.1" /><rect x="2.5" y="9" width="6.5" height="10" fill="#4a463e" stroke="#111"/><circle cx="14.5" cy="11.5" r="3.4" fill="#fff" stroke="#111" stroke-width="1.5"/><path d="M13 11.5h3" fill="none" stroke="#111" stroke-width="1.2" /><path d="M17 14l3 4" fill="none" stroke="#b4551c" stroke-width="2.2" /><path d="M17 8h5l-2.5 3z" fill="#1c2846" stroke="none" stroke-width="1" /></svg>
<div style="left:600px;top:68px;width:1px;height:20px;background:#8593af"></div>
<svg style="left:605px;top:68px;" width="22" height="19" viewBox="0 0 22 19"><rect x="0" y="0" width="16.5" height="13.5" fill="#f0f0f0" stroke="#0a0aa0" stroke-width="1.2"/><rect x="0.5" y="0.5" width="15.5" height="4.5" fill="#1010e0" /><rect x="2" y="6" width="12" height="2" fill="#38c850" /><rect x="2" y="8.5" width="12" height="3.5" fill="#c8c8c8" /><circle cx="12.5" cy="12" r="3.2" fill="#fff" stroke="#111" stroke-width="1.4"/><path d="M11 12h3" fill="none" stroke="#111" stroke-width="1" /><path d="M15 14.5l3.5 3.5" fill="none" stroke="#b4551c" stroke-width="2.2" /></svg>
<div style="left:626px;top:67px;width:22px;height:21px;background:#c9d1e1"></div>
<svg style="left:627px;top:68px;" width="21" height="19" viewBox="0 0 21 19"><path d="M1 9v8M19 9v8M1 13.5h18" fill="none" stroke="#aeb3bd" stroke-width="2.2" /><path d="M7 3h6l-1.5 4h-3z" fill="#aeb3bd" stroke="none" stroke-width="1" /></svg>
<div style="left:648px;top:67px;width:12px;height:22px;background:#d0d8e8;border-radius:0 4px 4px 0"></div>
<svg style="left:650px;top:80px;" width="9" height="8" viewBox="0 0 9 8"><rect x="1.5" y="0.3" width="6" height="1.3" fill="#1c2846" /><path d="M1.2 3.2h6.600l-3.300 3.600z" fill="#1c2846" stroke="none" stroke-width="1" /></svg>
<div style="left:667px;top:69px;width:2px;height:2px;background:#5a6b8e"></div>
<div style="left:667px;top:73px;width:2px;height:2px;background:#5a6b8e"></div>
<div style="left:667px;top:77px;width:2px;height:2px;background:#5a6b8e"></div>
<div style="left:667px;top:81px;width:2px;height:2px;background:#5a6b8e"></div>
<svg style="left:672px;top:68px;" width="21" height="19" viewBox="0 0 21 19"><rect x="0.5" y="1" width="19" height="17" fill="#c5c8cf" stroke="#9398a2"/><rect x="0.5" y="1" width="19" height="4" fill="#9b9fa9" /><path d="M3 9h4M3 12h4M10 9h7M10 12h7" fill="none" stroke="#8a8f99" stroke-width="1.5" stroke-dasharray="1.6 1"/></svg>
<svg style="left:695px;top:68px;" width="21" height="19" viewBox="0 0 21 19"><rect x="3" y="1.5" width="14" height="16" fill="#8a8f99" /><rect x="5.5" y="4" width="8" height="11" fill="#b9bdc5" /><text x="7.8" y="13" font-family="Liberation Sans,sans-serif" font-size="9" fill="#6a6f79" font-weight="bold">i</text><path d="M0.5 5h3M0.5 13h3M17 3v14" fill="none" stroke="#7c818b" stroke-width="1.2" /></svg>
<svg style="left:716px;top:68px;" width="21" height="19" viewBox="0 0 21 19"><rect x="0.5" y="1" width="19" height="17" fill="#c9ccd2" stroke="#9398a2"/><path d="M0.5 5h19M0.5 9h19M0.5 13h19M5 1v17" fill="none" stroke="#a0a4ad" stroke-width="1" /></svg>
<svg style="left:738px;top:68px;" width="21" height="19" viewBox="0 0 21 19"><rect x="8" y="0" width="12" height="9" fill="#c9ccd2" stroke="#b0b4bc"/><path d="M8 3h12M8 6h12M12 0v9M16 0v9" fill="none" stroke="#dfe1e6" stroke-width="0.8" /><rect x="0.5" y="7" width="9" height="11" fill="#8a8f99" /><rect x="2.5" y="12" width="5" height="6" fill="#c5c8cf" /><path d="M1 4l4-3v2h3v2.5h-3v2z" fill="#7c818b" stroke="none" stroke-width="1" /></svg>
<div style="left:760px;top:67px;width:12px;height:22px;background:#d0d8e8;border-radius:0 4px 4px 0"></div>
<svg style="left:762px;top:80px;" width="9" height="8" viewBox="0 0 9 8"><rect x="1.5" y="0.3" width="6" height="1.3" fill="#1c2846" /><path d="M1.2 3.2h6.600l-3.300 3.600z" fill="#1c2846" stroke="none" stroke-width="1" /></svg>
<div style="left:45px;top:90px;width:1123px;height:26px;background:#eaeff7;border-top:1px solid #b79a4a;border-bottom:1px solid #b79a4a;border-right:1px solid #b79a4a;border-left:1px solid #b79a4a;border-radius:0 3px 0 0"></div>
<div style="left:50px;top:96px;width:2px;height:2px;background:#5a6b8e"></div>
<div style="left:50px;top:100px;width:2px;height:2px;background:#5a6b8e"></div>
<div style="left:50px;top:104px;width:2px;height:2px;background:#5a6b8e"></div>
<div style="left:50px;top:108px;width:2px;height:2px;background:#5a6b8e"></div>
<svg style="left:54px;top:93px;" width="22" height="12" viewBox="0 0 22 12"><path d="M2 6h5.5M7.5 1.5v9M13.5 1.5v9M13.5 6h6" fill="none" stroke="#555a64" stroke-width="1.1" /></svg>
<div style="left:45px;top:105px;width:40px;height:10px;line-height:10px;font-size:10px;color:#50545e;text-align:center;letter-spacing:-0.3px;white-space:nowrap">F5</div>
<svg style="left:77px;top:93px;" width="22" height="12" viewBox="0 0 22 12"><path d="M2.5 1.5v5h5v-5M7.5 6.5v4M13.5 1.5v5M13.5 1.5h4v5h-4" fill="none" stroke="#555a64" stroke-width="1.1" /></svg>
<div style="left:68px;top:105px;width:40px;height:10px;line-height:10px;font-size:10px;color:#50545e;text-align:center;letter-spacing:-0.3px;white-space:nowrap">sF5</div>
<svg style="left:99px;top:93px;" width="22" height="12" viewBox="0 0 22 12"><path d="M1 6h6M7 1.5v9M13 1.5v9M13 6h6M5 10.5l10-9" fill="none" stroke="#555a64" stroke-width="1.1" /></svg>
<div style="left:90px;top:105px;width:40px;height:10px;line-height:10px;font-size:10px;color:#50545e;text-align:center;letter-spacing:-0.3px;white-space:nowrap">F6</div>
<svg style="left:121px;top:93px;" width="22" height="12" viewBox="0 0 22 12"><path d="M2.5 1.5v5h5v-5M7.5 6.5v4M14 1.5v5h4.5v-5M4 10.5l12-9" fill="none" stroke="#555a64" stroke-width="1.1" /></svg>
<div style="left:112px;top:105px;width:40px;height:10px;line-height:10px;font-size:10px;color:#50545e;text-align:center;letter-spacing:-0.3px;white-space:nowrap">sF6</div>
<svg style="left:143px;top:93px;" width="22" height="12" viewBox="0 0 22 12"><path d="M1 6h4M15 6h4" fill="none" stroke="#555a64" stroke-width="1.1" /><path d="M8 1.5a6 6 0 0 0 0 9M12 1.5a6 6 0 0 1 0 9" fill="none" stroke="#555a64" stroke-width="1.1" /></svg>
<div style="left:134px;top:105px;width:40px;height:10px;line-height:10px;font-size:10px;color:#50545e;text-align:center;letter-spacing:-0.3px;white-space:nowrap">F7</div>
<svg style="left:165px;top:93px;" width="22" height="12" viewBox="0 0 22 12"><path d="M1 6h4M15 6h4M8.5 1.5h-3v9h3M11.5 1.5h3v9h-3" fill="none" stroke="#555a64" stroke-width="1.1" /></svg>
<div style="left:156px;top:105px;width:40px;height:10px;line-height:10px;font-size:10px;color:#50545e;text-align:center;letter-spacing:-0.3px;white-space:nowrap">F8</div>
<div style="left:189px;top:95px;width:1px;height:18px;background:#8593af"></div>
<svg style="left:193px;top:93px;" width="22" height="12" viewBox="0 0 22 12"><path d="M1 6h20" fill="none" stroke="#555a64" stroke-width="1.1" /></svg>
<div style="left:184px;top:105px;width:40px;height:10px;line-height:10px;font-size:10px;color:#50545e;text-align:center;letter-spacing:-0.3px;white-space:nowrap">F9</div>
<svg style="left:215px;top:93px;" width="22" height="12" viewBox="0 0 22 12"><path d="M11 1.5v9" fill="none" stroke="#555a64" stroke-width="1.1" /></svg>
<div style="left:206px;top:105px;width:40px;height:10px;line-height:10px;font-size:10px;color:#50545e;text-align:center;letter-spacing:-0.3px;white-space:nowrap">sF9</div>
<svg style="left:237px;top:93px;" width="22" height="12" viewBox="0 0 22 12"><path d="M1 6h20M6 1l10 10M16 1l-10 10" fill="none" stroke="#555a64" stroke-width="1.1" /></svg>
<div style="left:228px;top:105px;width:40px;height:10px;line-height:10px;font-size:10px;color:#50545e;text-align:center;letter-spacing:-0.3px;white-space:nowrap">cF9</div>
<svg style="left:259px;top:93px;" width="22" height="12" viewBox="0 0 22 12"><path d="M11 1v10M6 1l10 10M16 1l-10 10" fill="none" stroke="#555a64" stroke-width="1.1" /></svg>
<div style="left:251px;top:105px;width:40px;height:10px;line-height:10px;font-size:10px;color:#50545e;text-align:center;letter-spacing:-0.3px;white-space:nowrap">cF10</div>
<div style="left:283px;top:95px;width:1px;height:18px;background:#8593af"></div>
<svg style="left:286px;top:93px;" width="22" height="12" viewBox="0 0 22 12"><path d="M1 6h4M5 1.5v9M11 1.5v9M8 10.5v-9l-2 2.5M8 1.5l2 2.5M11 6h-1M17 1.5v9M17 6h4" fill="none" stroke="#555a64" stroke-width="1.1" /></svg>
<div style="left:277px;top:105px;width:40px;height:10px;line-height:10px;font-size:10px;color:#50545e;text-align:center;letter-spacing:-0.3px;white-space:nowrap">sF7</div>
<svg style="left:308px;top:93px;" width="22" height="12" viewBox="0 0 22 12"><path d="M1 6h4M5 1.5v9M11 1.5v9M8 1.5v9l-2-2.5M8 10.5l2-2.5M17 1.5v9M17 6h4" fill="none" stroke="#555a64" stroke-width="1.1" /></svg>
<div style="left:299px;top:105px;width:40px;height:10px;line-height:10px;font-size:10px;color:#50545e;text-align:center;letter-spacing:-0.3px;white-space:nowrap">sF8</div>
<svg style="left:331px;top:93px;" width="22" height="12" viewBox="0 0 22 12"><path d="M2 1.5v5h4v-5M6 6.5v4M10 10.5v-9l-2 2.5M10 1.5l2 2.5M15 1.5v5h4v-5M15 6.5v4" fill="none" stroke="#555a64" stroke-width="1.1" /></svg>
<div style="left:322px;top:105px;width:40px;height:10px;line-height:10px;font-size:10px;color:#50545e;text-align:center;letter-spacing:-0.3px;white-space:nowrap">aF7</div>
<svg style="left:353px;top:93px;" width="22" height="12" viewBox="0 0 22 12"><path d="M2 1.5v5h4v-5M6 6.5v4M10 1.5v9l-2-2.5M10 10.5l2-2.5M15 1.5v5h4v-5M15 6.5v4" fill="none" stroke="#555a64" stroke-width="1.1" /></svg>
<div style="left:344px;top:105px;width:40px;height:10px;line-height:10px;font-size:10px;color:#50545e;text-align:center;letter-spacing:-0.3px;white-space:nowrap">aF8</div>
<div style="left:377px;top:95px;width:1px;height:18px;background:#8593af"></div>
<svg style="left:381px;top:93px;" width="22" height="12" viewBox="0 0 22 12"><path d="M1 6h20M5 1.5v9M9 1.5v9M14 1.5v9M18 1.5v9M11.5 1v10M10 3l1.5-2l1.5 2" fill="none" stroke="#555a64" stroke-width="1.1" /></svg>
<div style="left:372px;top:105px;width:40px;height:10px;line-height:10px;font-size:10px;color:#50545e;text-align:center;letter-spacing:-0.3px;white-space:nowrap">saF5</div>
<svg style="left:403px;top:93px;" width="22" height="12" viewBox="0 0 22 12"><path d="M1 6h20M5 1.5v9M9 1.5v9M14 1.5v9M18 1.5v9M11.5 1v10M10 3l1.5-2l1.5 2" fill="none" stroke="#555a64" stroke-width="1.1" /></svg>
<div style="left:394px;top:105px;width:40px;height:10px;line-height:10px;font-size:10px;color:#50545e;text-align:center;letter-spacing:-0.3px;white-space:nowrap">saF6</div>
<svg style="left:425px;top:93px;" width="22" height="12" viewBox="0 0 22 12"><path d="M2 1.5v5h4v-5M6 6.5v4M9 1.5v5h4v-5M15 1.5v5h4v-5M11.5 1v10M10 8.5l1.5 2l1.5-2" fill="none" stroke="#555a64" stroke-width="1.1" /></svg>
<div style="left:416px;top:105px;width:40px;height:10px;line-height:10px;font-size:10px;color:#50545e;text-align:center;letter-spacing:-0.3px;white-space:nowrap">saF7</div>
<svg style="left:447px;top:93px;" width="22" height="12" viewBox="0 0 22 12"><path d="M2 1.5v5h4v-5M6 6.5v4M9 1.5v5h4v-5M15 1.5v5h4v-5M11.5 1v10M10 8.5l1.5 2l1.5-2" fill="none" stroke="#555a64" stroke-width="1.1" /></svg>
<div style="left:438px;top:105px;width:40px;height:10px;line-height:10px;font-size:10px;color:#50545e;text-align:center;letter-spacing:-0.3px;white-space:nowrap">saF8</div>
<div style="left:471px;top:95px;width:1px;height:18px;background:#8593af"></div>
<svg style="left:475px;top:93px;" width="22" height="12" viewBox="0 0 22 12"><path d="M11 1.5v9M8.5 4l2.5-2.5l2.5 2.5" fill="none" stroke="#555a64" stroke-width="1.1" /></svg>
<div style="left:466px;top:105px;width:40px;height:10px;line-height:10px;font-size:10px;color:#50545e;text-align:center;letter-spacing:-0.3px;white-space:nowrap">aF5</div>
<svg style="left:497px;top:93px;" width="22" height="12" viewBox="0 0 22 12"><path d="M11 1.5v9M8.5 8l2.5 2.5l2.5-2.5" fill="none" stroke="#555a64" stroke-width="1.1" /></svg>
<div style="left:488px;top:105px;width:40px;height:10px;line-height:10px;font-size:10px;color:#50545e;text-align:center;letter-spacing:-0.3px;white-space:nowrap">caF5</div>
<svg style="left:519px;top:93px;" width="22" height="12" viewBox="0 0 22 12"><path d="M1 6h20M7 10l9-8" fill="none" stroke="#555a64" stroke-width="1.1" /></svg>
<div style="left:510px;top:105px;width:40px;height:10px;line-height:10px;font-size:10px;color:#50545e;text-align:center;letter-spacing:-0.3px;white-space:nowrap">caF10</div>
<div style="left:543px;top:95px;width:1px;height:18px;background:#8593af"></div>
<svg style="left:548px;top:95px;" width="22" height="19" viewBox="0 0 22 19"><path d="M0.5 3v11M21 3v11M0.5 8.5h3M18 8.5h3" fill="none" stroke="#555a64" stroke-width="1" /><rect x="3" y="1.5" width="15" height="15" fill="#b9bcc4" stroke="#5f646e" stroke-width="1.6"/><text x="5.5" y="13" font-family="Liberation Sans,sans-serif" font-size="9.5" fill="#f4f4f6" font-weight="bold" font-family="Liberation Serif,serif">ST</text></svg>
<div style="left:571px;top:95px;width:1px;height:18px;background:#8593af"></div>
<svg style="left:575px;top:94px;" width="22" height="20" viewBox="0 0 22 20"><path d="M1 4h5M6 1v6M12 1v6M12 4h5" fill="none" stroke="#7a7f89" stroke-width="1.6" /><rect x="1" y="9" width="13" height="7" fill="#c3c6cd" rx="3.5" stroke="#9a9ea8" stroke-width="0.8"/><path d="M3 11h9M3 13h8" fill="none" stroke="#9a9ea8" stroke-width="0.7" /><path d="M10 14l6-6l3 2l-6 6z" fill="#9a9ea8" stroke="none" stroke-width="1" /></svg>
<svg style="left:597px;top:94px;" width="22" height="20" viewBox="0 0 22 20"><rect x="1" y="2.5" width="4" height="2" fill="#fff" stroke="#7a7f89" stroke-width="0.9"/><rect x="6" y="0.5" width="12" height="7" fill="#c3c6cd" rx="3.5" stroke="#9a9ea8" stroke-width="0.8"/><path d="M8 2.5h8M8 4.5h7" fill="none" stroke="#9a9ea8" stroke-width="0.7" /><path d="M13 8l5-4l2 2l-5 4z" fill="#9a9ea8" stroke="none" stroke-width="1" /><path d="M0 15h3M3 12.5v5M6 12.5v5M6 15h3" fill="none" stroke="#7a7f89" stroke-width="1" /><path d="M9 15h2" fill="none" stroke="#7a7f89" stroke-width="1" /><circle cx="13" cy="15" r="2" fill="none" stroke="#7a7f89" stroke-width="1"/></svg>
<svg style="left:619px;top:94px;" width="22" height="20" viewBox="0 0 22 20"><rect x="1" y="0.5" width="12" height="7" fill="#c3c6cd" rx="3.5" stroke="#9a9ea8" stroke-width="0.8"/><path d="M3 2.5h8M3 4.5h7" fill="none" stroke="#9a9ea8" stroke-width="0.7" /><path d="M12 7l5-4l2 2l-5 4z" fill="#9a9ea8" stroke="none" stroke-width="1" /><path d="M0 15h3M17 15h3" fill="none" stroke="#7a7f89" stroke-width="1" /><path d="M6 12a4 4 0 0 0 0 6M14 12a4 4 0 0 1 0 6" fill="none" stroke="#7a7f89" stroke-width="1" /></svg>
<div style="left:643px;top:95px;width:1px;height:18px;background:#8593af"></div>
<svg style="left:648px;top:94px;" width="22" height="20" viewBox="0 0 22 20"><rect x="0.5" y="2.5" width="4" height="2" fill="#fff" stroke="#7a7f89" stroke-width="0.9"/><rect x="6" y="0.5" width="12" height="7" fill="#c3c6cd" rx="3.5" stroke="#9a9ea8" stroke-width="0.8"/><path d="M8 2.5h8M8 4.5h7" fill="none" stroke="#9a9ea8" stroke-width="0.7" /><path d="M0 15h3M3 12.5v5M6 12.5v5M6 15h3" fill="none" stroke="#7a7f89" stroke-width="1" /><rect x="10" y="10.5" width="9.5" height="8" fill="#c3c6cd" stroke="#9a9ea8" stroke-width="0.8"/><path d="M10 14.5h9.5M13.166666666666666 10.5v8M16.333333333333332 10.5v8" fill="none" stroke="#9a9ea8" stroke-width="0.7" /></svg>
<div style="left:671px;top:95px;width:1px;height:18px;background:#8593af"></div>
<svg style="left:676px;top:94px;" width="22" height="20" viewBox="0 0 22 20"><rect x="0.5" y="2.5" width="4" height="2" fill="#fff" stroke="#7a7f89" stroke-width="0.9"/><rect x="6" y="0.5" width="12" height="7" fill="#c3c6cd" rx="3.5" stroke="#9a9ea8" stroke-width="0.8"/><path d="M8 2.5h8M8 4.5h7" fill="none" stroke="#9a9ea8" stroke-width="0.7" /><path d="M0 15h3M3 12.5v5M6 12.5v5M6 15h3" fill="none" stroke="#7a7f89" stroke-width="1" /><rect x="10" y="10.5" width="9.5" height="8" fill="#c3c6cd" stroke="#9a9ea8" stroke-width="0.8"/><path d="M10 14.5h9.5M13.166666666666666 10.5v8M16.333333333333332 10.5v8" fill="none" stroke="#9a9ea8" stroke-width="0.7" /></svg>
<div style="left:699px;top:95px;width:1px;height:18px;background:#8593af"></div>
<svg style="left:705px;top:94px;" width="22" height="20" viewBox="0 0 22 20"><path d="M0 0.5h13l-3 4.5l3 4h-13z" fill="#7a7f89" stroke="none" stroke-width="1" /><path d="M8 14l8-7.5l3 3l-8 7.5l-4 1z" fill="#9a9ea8" stroke="none" stroke-width="1" /></svg>
<svg style="left:726px;top:94px;" width="22" height="20" viewBox="0 0 22 20"><rect x="0.5" y="0.5" width="16" height="18" fill="#c3c6cd" stroke="#7a7f89" stroke-width="1.2"/><path d="M3 4h11M3 7h11M3 10h7M3 13h7" fill="none" stroke="#9a9ea8" stroke-width="1.2" /><rect x="9" y="7.5" width="10" height="8" fill="#b4b8c0" stroke="#7a7f89"/><path d="M11 10h6M11 12.5h6" fill="none" stroke="#e4e6ea" stroke-width="1" /></svg>
<svg style="left:749px;top:94px;" width="22" height="20" viewBox="0 0 22 20"><rect x="5" y="0.5" width="11" height="9" fill="#c3c6cd" stroke="#9a9ea8"/><path d="M7 3h7M7 5.5h5" fill="none" stroke="#9a9ea8" stroke-width="1" /><path d="M0 13l4-4v8z" fill="#9a9ea8" stroke="none" stroke-width="1" /><circle cx="12" cy="12" r="4.5" fill="#d8dae0" stroke="#7a7f89" stroke-width="1.6"/><path d="M15.5 15.5l3 3" fill="none" stroke="#7a7f89" stroke-width="2" /></svg>
<svg style="left:771px;top:94px;" width="22" height="20" viewBox="0 0 22 20"><rect x="5" y="0.5" width="11" height="9" fill="#c3c6cd" stroke="#9a9ea8"/><path d="M7 3h7M7 5.5h5" fill="none" stroke="#9a9ea8" stroke-width="1" /><path d="M0 9v8l4-4z" fill="#7a7f89" stroke="none" stroke-width="1" /><circle cx="12" cy="12" r="4.5" fill="#d8dae0" stroke="#7a7f89" stroke-width="1.6"/><path d="M15.5 15.5l3 3" fill="none" stroke="#7a7f89" stroke-width="2" /></svg>
<svg style="left:793px;top:94px;" width="22" height="20" viewBox="0 0 22 20"><path d="M0 5h4v-2l3 3.5l-3 3.5v-2h-4z" fill="#7a7f89" stroke="none" stroke-width="1" /><path d="M9 2h9M9 6h9M9 10h9M9 14h9M9 18h9" fill="none" stroke="#c3c6cd" stroke-width="2" stroke-dasharray="3 1.2"/><path d="M12 0v19" fill="none" stroke="#9a9ea8" stroke-width="1" stroke-dasharray="2 1"/></svg>
<svg style="left:815px;top:94px;" width="22" height="20" viewBox="0 0 22 20"><path d="M7 5h-4v-2l-3 3.5l3 3.5v-2h4z" fill="#7a7f89" stroke="none" stroke-width="1" /><path d="M8 4h11M8 9h11M8 14h11M8 18h11" fill="none" stroke="#c3c6cd" stroke-width="2.4" /><path d="M10 16v3M14 16v3" fill="none" stroke="#9a9ea8" stroke-width="1" /></svg>
<div style="left:837px;top:95px;width:1px;height:18px;background:#8593af"></div>
<svg style="left:842px;top:94px;" width="22" height="20" viewBox="0 0 22 20"><path d="M0 3h4M4 1v4M6 1v4M6 3h14M0 9h4M4 7v4M6 7v4M6 9h14M9 9v7h11" fill="none" stroke="#7a7f89" stroke-width="1" stroke-dasharray="3.4 1"/></svg>
<svg style="left:864px;top:94px;" width="22" height="20" viewBox="0 0 22 20"><path d="M0 3h4M4 1v4M6 1v4M6 3h14M0 9h4M4 7v4M6 7v4M6 9h14M9 9v7h11" fill="none" stroke="#7a7f89" stroke-width="1" stroke-dasharray="3.4 1"/><path d="M9 9l8-8l2.5 2l-8 8z" fill="#7a7f89" stroke="none" stroke-width="1" /><circle cx="15" cy="15" r="2.5" fill="none" stroke="#7a7f89" stroke-width="1"/></svg>
<svg style="left:887px;top:94px;" width="22" height="20" viewBox="0 0 22 20"><circle cx="10" cy="6" r="5.5" fill="#c3c6cd" stroke="#9a9ea8" stroke-width="1.2"/><path d="M6.5 4h7M6.5 6.5h7M6.5 9h5" fill="none" stroke="#9a9ea8" stroke-width="0.9" /><path d="M14 10l5 6" fill="none" stroke="#9a9ea8" stroke-width="1.4" /><rect x="0" y="11" width="10" height="7.5" fill="#8a8f99" /><rect x="2.5" y="13" width="3.5" height="5.5" fill="#c3c6cd" /></svg>
<svg style="left:909px;top:94px;" width="22" height="20" viewBox="0 0 22 20"><circle cx="10" cy="6" r="5.5" fill="#c3c6cd" stroke="#9a9ea8" stroke-width="1.2"/><path d="M6.5 4h7M6.5 6.5h7M6.5 9h5" fill="none" stroke="#9a9ea8" stroke-width="0.9" /><path d="M14 10l5 6" fill="none" stroke="#9a9ea8" stroke-width="1.4" /><rect x="0" y="11" width="10" height="7.5" fill="#8a8f99" /><rect x="2.5" y="13" width="3.5" height="5.5" fill="#c3c6cd" /><path d="M12 4l6-4l2 2.5l-6 4z" fill="#7a7f89" stroke="none" stroke-width="1" /></svg>
<svg style="left:931px;top:94px;" width="22" height="20" viewBox="0 0 22 20"><rect x="0" y="0" width="19" height="11" fill="#9da1ab" /><text x="1" y="8.5" font-family="Liberation Sans,sans-serif" font-size="9" fill="#e4e6ea" font-weight="bold">Dev</text><circle cx="13" cy="12.5" r="4.5" fill="#dfe1e6" stroke="#7a7f89" stroke-width="1.6"/><path d="M16.5 16l3 3" fill="none" stroke="#7a7f89" stroke-width="2" /></svg>
<svg style="left:953px;top:94px;" width="22" height="20" viewBox="0 0 22 20"><rect x="0" y="0" width="19" height="11" fill="#9da1ab" /><text x="1" y="8.5" font-family="Liberation Sans,sans-serif" font-size="9" fill="#e4e6ea" font-weight="bold">Dev</text><rect x="1" y="10.5" width="17" height="7.5" fill="#a9adb6" /><path d="M12 4l5-4l2 2.5l-5 4zM4 11v6h4" fill="none" stroke="#7a7f89" stroke-width="1.4" /></svg>
<svg style="left:975px;top:94px;" width="22" height="20" viewBox="0 0 22 20"><path d="M0 4h10M5 0v8" fill="none" stroke="#7a7f89" stroke-width="2" /><rect x="8" y="6" width="8" height="3" fill="#8a8f99" /><rect x="8" y="13" width="8" height="3" fill="#c3c6cd" /><rect x="15" y="5" width="4.5" height="14" fill="#9da1ab" /></svg>
<svg style="left:997px;top:94px;" width="22" height="20" viewBox="0 0 22 20"><rect x="0" y="3" width="10" height="2.2" fill="#fff" stroke="#7a7f89" stroke-width="0.9"/><rect x="6" y="9" width="9" height="3" fill="#7a7f89" /><rect x="6" y="14.5" width="9" height="3" fill="#7a7f89" /><rect x="15" y="5" width="4.5" height="14" fill="#9da1ab" /></svg>
<svg style="left:1019px;top:94px;" width="22" height="20" viewBox="0 0 22 20"><path d="M2 2h13" fill="none" stroke="#5a5f69" stroke-width="2" /><path d="M5 6h10M5 10h10" fill="none" stroke="#c3c6cd" stroke-width="1.2" /><path d="M5 14.5h10M5 18h10" fill="none" stroke="#6a6f79" stroke-width="1.8" /></svg>
<svg style="left:1041px;top:94px;" width="22" height="20" viewBox="0 0 22 20"><path d="M3 4a5 3 0 1 1 4 3" fill="none" stroke="#9a9ea8" stroke-width="1.4" /><path d="M4 10h12" fill="none" stroke="#c3c6cd" stroke-width="1.2" /><path d="M3 14.5h13M3 18.5h13" fill="none" stroke="#7a7f89" stroke-width="1.3" /></svg>
<svg style="left:1063px;top:94px;" width="22" height="20" viewBox="0 0 22 20"><path d="M0.5 0v19M0.5 9h16M0.5 18.5h16M4 3h12" fill="none" stroke="#7a7f89" stroke-width="1.1" /><path d="M5 9a5 5 0 0 0 10-5" fill="none" stroke="#9a9ea8" stroke-width="1.6" /></svg>
<svg style="left:1085px;top:94px;" width="22" height="20" viewBox="0 0 22 20"><rect x="0.5" y="2.5" width="4" height="2" fill="#fff" stroke="#7a7f89" stroke-width="0.9"/><rect x="6" y="0.5" width="13" height="8" fill="#c3c6cd" rx="4.0" stroke="#9a9ea8" stroke-width="0.8"/><path d="M8 2.5h9M8 4.5h8" fill="none" stroke="#9a9ea8" stroke-width="0.7" /><path d="M0 15h3M3 12.5v5M6 12.5v5M6 15h3" fill="none" stroke="#7a7f89" stroke-width="1" /><rect x="10" y="11" width="9.5" height="7.5" fill="#c3c6cd" stroke="#9a9ea8" stroke-width="0.8"/><path d="M10 14.75h9.5M13.166666666666666 11v7.5M16.333333333333332 11v7.5" fill="none" stroke="#9a9ea8" stroke-width="0.7" /></svg>
<div style="left:1107px;top:95px;width:1px;height:18px;background:#8593af"></div>
<svg style="left:1114px;top:94px;" width="22" height="20" viewBox="0 0 22 20"><rect x="8" y="0" width="11" height="9" fill="#dfe1e6" stroke="#c3c6cd"/><path d="M8 3h11M8 6h11M12 0v9M16 0v9" fill="none" stroke="#f4f5f8" stroke-width="0.8" /><rect x="0" y="6.5" width="10" height="12" fill="#8a8f99" /><rect x="2.5" y="12.5" width="5" height="6" fill="#c3c6cd" /><path d="M0 4l4-3v2h3v2.5h-3v2z" fill="#7c818b" stroke="none" stroke-width="1" /></svg>
<svg style="left:1136px;top:94px;" width="22" height="20" viewBox="0 0 22 20"><rect x="8" y="0" width="11" height="9" fill="#dfe1e6" stroke="#c3c6cd"/><path d="M8 3h11M8 6h11M12 0v9M16 0v9" fill="none" stroke="#f4f5f8" stroke-width="0.8" /><rect x="0" y="6.5" width="10" height="12" fill="#8a8f99" /><rect x="2.5" y="12.5" width="5" height="6" fill="#c3c6cd" /><path d="M0 4l4-3v2h3v2.5h-3v2z" fill="#7c818b" stroke="none" stroke-width="1" /></svg>
<div style="left:1157px;top:92px;width:11px;height:23px;background:#d0d8e8;border-radius:0 3px 3px 0"></div>
<svg style="left:1158px;top:106px;" width="9" height="8" viewBox="0 0 9 8"><rect x="1.5" y="0.3" width="6" height="1.3" fill="#1c2846" /><path d="M1.2 3.2h6.600l-3.300 3.600z" fill="#1c2846" stroke="none" stroke-width="1" /></svg>
<div style="left:45px;top:116px;width:263px;height:837px;background:#b4b9c4"></div>
<div style="left:45px;top:117px;width:263px;height:25px;background:linear-gradient(#fffaea 0%,#fff1cc 48%,#ffe5a0 52%,#ffe5a0 100%)"></div>
<div style="left:49px;top:121px;height:20px;line-height:20px;font-size:15px;color:#000;white-space:nowrap;">导航</div>
<svg style="left:277px;top:123px;" width="8" height="12" viewBox="0 0 8 12"><path d="M2 1h4v5.500h-4zM0.500 6.500h7M4 6.500v5" fill="none" stroke="#6b5a2a" stroke-width="1.1" /><rect x="4.6" y="1" width="1.4" height="5.5" fill="#6b5a2a" /></svg>
<svg style="left:293px;top:124px;" width="10" height="9" viewBox="0 0 10 9"><path d="M1 1l7.500 7M8.500 1l-7.500 7" fill="none" stroke="#6b5a2a" stroke-width="1.4" /></svg>
<div style="left:45px;top:142px;width:263px;height:34px;background:#a9b7d0;border-top:2px solid #747474"></div>
<div style="left:48px;top:144px;width:258px;height:31px;background:#bac6da;border-radius:4px 4px 0 0"></div>
<svg style="left:54px;top:149px;" width="22" height="22" viewBox="0 0 22 22"><rect x="1" y="0.5" width="7" height="6" fill="#fff" stroke="#222" stroke-width="1.200"/><path d="M3 3.500h3" fill="none" stroke="#222" stroke-width="1.2" /><path d="M8 3.500h4.500v15h6M12.500 5.500h6" fill="none" stroke="#222" stroke-width="1.2" /><path d="M15.500 6.500l3 4.500h-6zM15.500 17.500l3-4.500h-6z" fill="#e81818" stroke="none" stroke-width="1" /><path d="M12.500 12h6" fill="none" stroke="#e81818" stroke-width="1.6" /><path d="M17 10.500h4l-2 2.500z" fill="#1c2846" stroke="none" stroke-width="1" /></svg>
<div style="left:82px;top:147px;width:1px;height:22px;background:#8f9db8"></div>
<svg style="left:86px;top:148px;" width="22" height="22" viewBox="0 0 22 22"><rect x="1" y="1" width="6" height="6" fill="#fff" stroke="#222" stroke-width="1"/><path d="M2.500 4h3" fill="none" stroke="#222" stroke-width="1" /><path d="M8 4h3M11 2v10M11 2.500h8M11 11.500h8" fill="none" stroke="#222" stroke-width="1.1" /></svg>
<div style="left:110px;top:147px;width:1px;height:22px;background:#8f9db8"></div>
<svg style="left:114px;top:148px;" width="21" height="21" viewBox="0 0 21 21"><rect x="8.5" y="0" width="4" height="21" fill="#3a3a3a" transform="rotate(0 10.500 10.500)"/><rect x="8.5" y="0" width="4" height="21" fill="#3a3a3a" transform="rotate(45 10.500 10.500)"/><rect x="8.5" y="0" width="4" height="21" fill="#3a3a3a" transform="rotate(90 10.500 10.500)"/><rect x="8.5" y="0" width="4" height="21" fill="#3a3a3a" transform="rotate(135 10.500 10.500)"/><circle cx="10.5" cy="10.5" r="7" fill="#3a3a3a" stroke="none" stroke-width="1"/><circle cx="10.5" cy="10.5" r="3.2" fill="#b9c5d9" stroke="none" stroke-width="1"/></svg>
<div style="left:138px;top:147px;width:1px;height:22px;background:#8f9db8"></div>
<div style="left:143px;top:147px;width:98px;height:25px;background:#fff"></div>
<div style="left:146px;top:150px;height:20px;line-height:20px;font-size:15px;color:#000;white-space:nowrap;">全部</div>
<div style="left:226px;top:148px;width:14px;height:23px;background:#b9c6db"></div>
<svg style="left:229px;top:158px;" width="8" height="5" viewBox="0 0 8 5"><path d="M0 0h8l-4 4.600z" fill="#1c2846" stroke="none" stroke-width="1" /></svg>
<div style="left:47px;top:175px;width:259px;height:751px;background:#35496a;border-top:1px solid #5b86c8;border-left:1px solid #4a78c0"></div>
<div style="left:306px;top:142px;width:2px;height:786px;background:#dfe5ee"></div>
<svg style="left:50px;top:180px;" width="16" height="16" viewBox="0 0 16 16"><path d="M0 6.500l2.500-4.500h6v5.500h-7z" fill="#8a8a8a" stroke="#555" stroke-width="0.6" /><rect x="3" y="3" width="4.5" height="3" fill="#b8b8b8" /><rect x="4.5" y="6" width="4" height="9.5" fill="#ee4a52" /><rect x="8.5" y="4" width="3.5" height="11.5" fill="#6e6e6e" /><path d="M9.200 7h2M9.200 9.500h2M9.200 12h2" fill="none" stroke="#ddd" stroke-width="0.9" /><rect x="9.5" y="4.8" width="1.2" height="1.2" fill="#4be04b" /><rect x="12" y="5.5" width="3.3" height="10" fill="#fff" stroke="#555" stroke-width="0.500"/><rect x="12.8" y="4" width="1.6" height="2" fill="#333" /></svg>
<div class="nv" style="left:70px;top:178px;height:20px;line-height:20px;font-size:15px;color:#fff;white-space:nowrap;">工程</div>
<svg style="left:64px;top:204px;" width="16" height="16" viewBox="0 0 16 16"><rect x="0.5" y="1" width="15" height="13" fill="#222" /><rect x="1.5" y="4" width="6" height="9" fill="#ee4a52" /><rect x="8" y="4" width="3" height="9" fill="#3aa84a" /><rect x="11.5" y="4" width="3.2" height="9" fill="#2e8a3c" /><path d="M2 2.5h12" fill="none" stroke="#ddd" stroke-width="1" stroke-dasharray="1.5 1"/></svg>
<div class="nv" style="left:84px;top:202px;height:20px;line-height:20px;font-size:15px;color:#fff;white-space:nowrap;">模块配置图</div>
<svg style="left:64px;top:228px;" width="16" height="16" viewBox="0 0 16 16"><path d="M0.5 4.5h5l1.5-1.5h8.5v11.5h-15z" fill="#f2c24a" stroke="#a87a10" stroke-width="0.8" /><path d="M0.5 14.5l2-7.5h13l-0 7.5z" fill="#ffe07a" stroke="#b88a18" stroke-width="0.6" /><rect x="4" y="1.5" width="10" height="7" fill="#dff0ff" stroke="#355" stroke-width="0.8"/><path d="M3 12l8-6l2 1.5l-8 6z" fill="#2a8a3a" stroke="none" stroke-width="1" /><rect x="5.5" y="3" width="7" height="4" fill="#8fd0f8" /></svg>
<div class="nv" style="left:84px;top:226px;height:20px;line-height:20px;font-size:15px;color:#fff;white-space:nowrap;">程序</div>
<div style="left:50px;top:232px;width:9px;height:9px;background:linear-gradient(#fff,#d4dae6);border:1px solid #a8b0c2"></div>
<div style="left:52px;top:236px;width:5px;height:1px;background:#2a4ab0"></div>
<svg style="left:78px;top:252px;" width="16" height="16" viewBox="0 0 16 16"><path d="M0.5 4.5h5l1.5-1.5h8.5v11.5h-15z" fill="#f2c24a" stroke="#a87a10" stroke-width="0.8" /><path d="M0.5 14.5l2-7.5h13l-0 7.5z" fill="#ffe07a" stroke="#b88a18" stroke-width="0.6" /><rect x="4.5" y="1" width="3" height="12" fill="#ee4a52" stroke="#801010" stroke-width="0.5"/><rect x="8" y="0.5" width="3" height="12.5" fill="#8a8a8a" stroke="#333" stroke-width="0.5"/><rect x="11.3" y="2" width="2.6" height="11" fill="#d8d8d8" stroke="#555" stroke-width="0.5"/><path d="M0.5 14.5l0.5-4h3v4z" fill="#ffd860" stroke="none" stroke-width="1" /></svg>
<div class="nv" style="left:98px;top:250px;height:20px;line-height:20px;font-size:15px;color:#fff;white-space:nowrap;">初始</div>
<svg style="left:78px;top:276px;" width="16" height="16" viewBox="0 0 16 16"><path d="M0.5 4.5h5l1.5-1.5h8.5v11.5h-15z" fill="#f2c24a" stroke="#a87a10" stroke-width="0.8" /><path d="M0.5 14.5l2-7.5h13l-0 7.5z" fill="#ffe07a" stroke="#b88a18" stroke-width="0.6" /><rect x="4.5" y="1" width="3" height="12" fill="#ee4a52" stroke="#801010" stroke-width="0.5"/><rect x="8" y="0.5" width="3" height="12.5" fill="#8a8a8a" stroke="#333" stroke-width="0.5"/><rect x="11.3" y="2" width="2.6" height="11" fill="#d8d8d8" stroke="#555" stroke-width="0.5"/><path d="M0.5 14.5l0.5-4h3v4z" fill="#ffd860" stroke="none" stroke-width="1" /></svg>
<div class="nv" style="left:98px;top:274px;height:20px;line-height:20px;font-size:15px;color:#fff;white-space:nowrap;">扫描</div>
<div style="left:64px;top:280px;width:9px;height:9px;background:linear-gradient(#fff,#d4dae6);border:1px solid #a8b0c2"></div>
<div style="left:66px;top:284px;width:5px;height:1px;background:#2a4ab0"></div>
<svg style="left:92px;top:300px;" width="16" height="16" viewBox="0 0 16 16"><rect x="0.5" y="4" width="6.5" height="11" fill="#3c3c3c" /><rect x="1.5" y="6" width="4.5" height="1.3" fill="#9a9a9a" /><rect x="1.5" y="8.5" width="4.5" height="1.3" fill="#9a9a9a" /><path d="M3.5 1.5l4 2.5l-4 2.5z" fill="#22a838" stroke="none" stroke-width="1" /><path d="M7 0h6l3 3v6h-9z" fill="#fff" stroke="#9a9a9a" stroke-width="0.8" /><path d="M13 0v3h3" fill="#dfe4ee" stroke="#9a9a9a" stroke-width="0.6" /><rect x="7.5" y="5.5" width="8" height="3" fill="#dde3ef" /><path d="M8.25 4.5h2.35M12.4 4.5h2.35M9.95 2.0v5M13.05 2.0v5" fill="none" stroke="#e81010" stroke-width="1.3" /><rect x="7" y="10" width="3" height="2" fill="#777" /></svg>
<div class="nv" style="left:113px;top:298px;height:20px;line-height:20px;font-size:15px;color:#fff;white-space:nowrap;"><span class="ls">MAIN_01 </span>系统</div>
<div style="left:78px;top:304px;width:9px;height:9px;background:linear-gradient(#fff,#d4dae6);border:1px solid #a8b0c2"></div>
<div style="left:80px;top:308px;width:5px;height:1px;background:#2a4ab0"></div>
<div style="left:48px;top:320px;width:224px;height:23px;background:#fff2a6"></div>
<svg style="left:106px;top:324px;" width="16" height="16" viewBox="0 0 16 16"><path d="M0.5 4h4l1 1.5h2v9h-7z" fill="#f0c050" stroke="#a87a10" stroke-width="0.6" /><path d="M3.5 0.5h7.5l3 3v10.5h-10.5z" fill="#fff" stroke="#9a9a9a" stroke-width="0.8" /><path d="M11.0 0.5v3h3" fill="#dfe4ee" stroke="#9a9a9a" stroke-width="0.6" /><rect x="4.0" y="10.5" width="9.5" height="3" fill="#dde3ef" /><path d="M4.75 7.25h3.1M9.65 7.25h3.1M7.199999999999999 4.75v5M10.3 4.75v5" fill="none" stroke="#e81010" stroke-width="1.3" /><rect x="9" y="10.5" width="7" height="5" fill="#2a2a2a" /><path d="M10.5 10.5v-1.5a2 2 0 0 1 4 0v1.5" fill="none" stroke="#2a2a2a" stroke-width="1.3" /><rect x="12" y="12.0" width="1.2" height="2" fill="#ddd" /></svg>
<div class="nv" style="left:126px;top:322px;height:20px;line-height:20px;font-size:15px;color:#000;white-space:nowrap;">系统</div>
<div style="left:92px;top:328px;width:9px;height:9px;background:#fff;border:1px solid #9aa4bc"></div>
<div style="left:94px;top:332px;width:5px;height:1px;background:#2a4ab0"></div>
<svg style="left:120px;top:348px;" width="16" height="16" viewBox="0 0 16 16"><rect x="1.5" y="0.5" width="8" height="5" fill="#dfe8f8" stroke="#7788aa" stroke-width="0.7" rx="1.5"/><rect x="1" y="5" width="11" height="8.5" fill="#e8ecf8" stroke="#7a80b8" stroke-width="0.8"/><path d="M1 8h11M1 10.5h11M5 5v8.5" fill="none" stroke="#8a90c8" stroke-width="0.8" /><rect x="8.5" y="10" width="7" height="5" fill="#2a2a2a" /><path d="M10.0 10v-1.5a2 2 0 0 1 4 0v1.5" fill="none" stroke="#2a2a2a" stroke-width="1.3" /><rect x="11.5" y="11.5" width="1.2" height="2" fill="#ddd" /></svg>
<div class="nv" style="left:140px;top:346px;height:20px;line-height:20px;font-size:15px;color:#fff;white-space:nowrap;">局部标签</div>
<svg style="left:120px;top:372px;" width="16" height="16" viewBox="0 0 16 16"><path d="M1.5 0.5h7.5l3 3v11h-10.5z" fill="#fff" stroke="#9a9a9a" stroke-width="0.8" /><path d="M9.0 0.5v3h3" fill="#dfe4ee" stroke="#9a9a9a" stroke-width="0.6" /><rect x="2.0" y="11.0" width="9.5" height="3" fill="#dde3ef" /><path d="M2.75 7.5h3.1M7.65 7.5h3.1M5.199999999999999 5.0v5M8.3 5.0v5" fill="none" stroke="#e81010" stroke-width="1.3" /><rect x="8.5" y="10" width="7" height="5" fill="#2a2a2a" /><path d="M10.0 10v-1.5a2 2 0 0 1 4 0v1.5" fill="none" stroke="#2a2a2a" stroke-width="1.3" /><rect x="11.5" y="11.5" width="1.2" height="2" fill="#ddd" /></svg>
<div class="nv" style="left:140px;top:370px;height:20px;line-height:20px;font-size:15px;color:#fff;white-space:nowrap;">程序本体</div>
<svg style="left:92px;top:396px;" width="16" height="16" viewBox="0 0 16 16"><rect x="0.5" y="4" width="6.5" height="11" fill="#3c3c3c" /><rect x="1.5" y="6" width="4.5" height="1.3" fill="#9a9a9a" /><rect x="1.5" y="8.5" width="4.5" height="1.3" fill="#9a9a9a" /><path d="M3.5 1.5l4 2.5l-4 2.5z" fill="#22a838" stroke="none" stroke-width="1" /><path d="M7 0h6l3 3v6h-9z" fill="#fff" stroke="#9a9a9a" stroke-width="0.8" /><path d="M13 0v3h3" fill="#dfe4ee" stroke="#9a9a9a" stroke-width="0.6" /><rect x="7.5" y="5.5" width="8" height="3" fill="#dde3ef" /><path d="M8.25 4.5h2.35M12.4 4.5h2.35M9.95 2.0v5M13.05 2.0v5" fill="none" stroke="#e81010" stroke-width="1.3" /><rect x="7" y="10" width="3" height="2" fill="#777" /></svg>
<div class="nv" style="left:113px;top:394px;height:20px;line-height:20px;font-size:15px;color:#fff;white-space:nowrap;"><span class="ls">MAIN_02 </span>异常</div>
<div style="left:78px;top:400px;width:9px;height:9px;background:linear-gradient(#fff,#d4dae6);border:1px solid #a8b0c2"></div>
<div style="left:80px;top:404px;width:5px;height:1px;background:#2a4ab0"></div>
<div style="left:82px;top:402px;width:1px;height:5px;background:#2a4ab0"></div>
<svg style="left:92px;top:420px;" width="16" height="16" viewBox="0 0 16 16"><rect x="0.5" y="4" width="6.5" height="11" fill="#3c3c3c" /><rect x="1.5" y="6" width="4.5" height="1.3" fill="#9a9a9a" /><rect x="1.5" y="8.5" width="4.5" height="1.3" fill="#9a9a9a" /><path d="M3.5 1.5l4 2.5l-4 2.5z" fill="#22a838" stroke="none" stroke-width="1" /><path d="M7 0h6l3 3v6h-9z" fill="#fff" stroke="#9a9a9a" stroke-width="0.8" /><path d="M13 0v3h3" fill="#dfe4ee" stroke="#9a9a9a" stroke-width="0.6" /><rect x="7.5" y="5.5" width="8" height="3" fill="#dde3ef" /><path d="M8.25 4.5h2.35M12.4 4.5h2.35M9.95 2.0v5M13.05 2.0v5" fill="none" stroke="#e81010" stroke-width="1.3" /><rect x="7" y="10" width="3" height="2" fill="#777" /></svg>
<div class="nv" style="left:113px;top:418px;height:20px;line-height:20px;font-size:15px;color:#fff;white-space:nowrap;"><span class="ls">MAIN_03 </span>输出</div>
<div style="left:78px;top:424px;width:9px;height:9px;background:linear-gradient(#fff,#d4dae6);border:1px solid #a8b0c2"></div>
<div style="left:80px;top:428px;width:5px;height:1px;background:#2a4ab0"></div>
<div style="left:82px;top:426px;width:1px;height:5px;background:#2a4ab0"></div>
<svg style="left:92px;top:444px;" width="16" height="16" viewBox="0 0 16 16"><rect x="0.5" y="4" width="6.5" height="11" fill="#3c3c3c" /><rect x="1.5" y="6" width="4.5" height="1.3" fill="#9a9a9a" /><rect x="1.5" y="8.5" width="4.5" height="1.3" fill="#9a9a9a" /><path d="M3.5 1.5l4 2.5l-4 2.5z" fill="#22a838" stroke="none" stroke-width="1" /><path d="M7 0h6l3 3v6h-9z" fill="#fff" stroke="#9a9a9a" stroke-width="0.8" /><path d="M13 0v3h3" fill="#dfe4ee" stroke="#9a9a9a" stroke-width="0.6" /><rect x="7.5" y="5.5" width="8" height="3" fill="#dde3ef" /><path d="M8.25 4.5h2.35M12.4 4.5h2.35M9.95 2.0v5M13.05 2.0v5" fill="none" stroke="#e81010" stroke-width="1.3" /><rect x="7" y="10" width="3" height="2" fill="#777" /></svg>
<div class="nv" style="left:113px;top:442px;height:20px;line-height:20px;font-size:15px;color:#fff;white-space:nowrap;"><span class="ls">MAIN_04 </span>伺服</div>
<div style="left:78px;top:448px;width:9px;height:9px;background:linear-gradient(#fff,#d4dae6);border:1px solid #a8b0c2"></div>
<div style="left:80px;top:452px;width:5px;height:1px;background:#2a4ab0"></div>
<div style="left:82px;top:450px;width:1px;height:5px;background:#2a4ab0"></div>
<svg style="left:92px;top:468px;" width="16" height="16" viewBox="0 0 16 16"><rect x="0.5" y="4" width="6.5" height="11" fill="#3c3c3c" /><rect x="1.5" y="6" width="4.5" height="1.3" fill="#9a9a9a" /><rect x="1.5" y="8.5" width="4.5" height="1.3" fill="#9a9a9a" /><path d="M3.5 1.5l4 2.5l-4 2.5z" fill="#22a838" stroke="none" stroke-width="1" /><path d="M7 0h6l3 3v6h-9z" fill="#fff" stroke="#9a9a9a" stroke-width="0.8" /><path d="M13 0v3h3" fill="#dfe4ee" stroke="#9a9a9a" stroke-width="0.6" /><rect x="7.5" y="5.5" width="8" height="3" fill="#dde3ef" /><path d="M8.25 4.5h2.35M12.4 4.5h2.35M9.95 2.0v5M13.05 2.0v5" fill="none" stroke="#e81010" stroke-width="1.3" /><rect x="7" y="10" width="3" height="2" fill="#777" /></svg>
<div class="nv" style="left:113px;top:466px;height:20px;line-height:20px;font-size:15px;color:#fff;white-space:nowrap;"><span class="ls">MAIN_05 </span>表单</div>
<div style="left:78px;top:472px;width:9px;height:9px;background:linear-gradient(#fff,#d4dae6);border:1px solid #a8b0c2"></div>
<div style="left:80px;top:476px;width:5px;height:1px;background:#2a4ab0"></div>
<div style="left:82px;top:474px;width:1px;height:5px;background:#2a4ab0"></div>
<svg style="left:92px;top:492px;" width="16" height="16" viewBox="0 0 16 16"><rect x="0.5" y="4" width="6.5" height="11" fill="#3c3c3c" /><rect x="1.5" y="6" width="4.5" height="1.3" fill="#9a9a9a" /><rect x="1.5" y="8.5" width="4.5" height="1.3" fill="#9a9a9a" /><path d="M3.5 1.5l4 2.5l-4 2.5z" fill="#22a838" stroke="none" stroke-width="1" /><path d="M7 0h6l3 3v6h-9z" fill="#fff" stroke="#9a9a9a" stroke-width="0.8" /><path d="M13 0v3h3" fill="#dfe4ee" stroke="#9a9a9a" stroke-width="0.6" /><rect x="7.5" y="5.5" width="8" height="3" fill="#dde3ef" /><path d="M8.25 4.5h2.35M12.4 4.5h2.35M9.95 2.0v5M13.05 2.0v5" fill="none" stroke="#e81010" stroke-width="1.3" /><rect x="7" y="10" width="3" height="2" fill="#777" /></svg>
<div class="nv" style="left:113px;top:490px;height:20px;line-height:20px;font-size:15px;color:#fff;white-space:nowrap;"><span class="ls">MAIN_06 </span>交握</div>
<div style="left:78px;top:496px;width:9px;height:9px;background:linear-gradient(#fff,#d4dae6);border:1px solid #a8b0c2"></div>
<div style="left:80px;top:500px;width:5px;height:1px;background:#2a4ab0"></div>
<div style="left:82px;top:498px;width:1px;height:5px;background:#2a4ab0"></div>
<svg style="left:92px;top:516px;" width="16" height="16" viewBox="0 0 16 16"><rect x="0.5" y="4" width="6.5" height="11" fill="#3c3c3c" /><rect x="1.5" y="6" width="4.5" height="1.3" fill="#9a9a9a" /><rect x="1.5" y="8.5" width="4.5" height="1.3" fill="#9a9a9a" /><path d="M3.5 1.5l4 2.5l-4 2.5z" fill="#22a838" stroke="none" stroke-width="1" /><path d="M7 0h6l3 3v6h-9z" fill="#fff" stroke="#9a9a9a" stroke-width="0.8" /><path d="M13 0v3h3" fill="#dfe4ee" stroke="#9a9a9a" stroke-width="0.6" /><rect x="7.5" y="5.5" width="8" height="3" fill="#dde3ef" /><path d="M8.25 4.5h2.35M12.4 4.5h2.35M9.95 2.0v5M13.05 2.0v5" fill="none" stroke="#e81010" stroke-width="1.3" /><rect x="7" y="10" width="3" height="2" fill="#777" /></svg>
<div class="nv" style="left:113px;top:514px;height:20px;line-height:20px;font-size:15px;color:#fff;white-space:nowrap;"><span class="ls">MAIN_07</span></div>
<div style="left:78px;top:520px;width:9px;height:9px;background:linear-gradient(#fff,#d4dae6);border:1px solid #a8b0c2"></div>
<div style="left:80px;top:524px;width:5px;height:1px;background:#2a4ab0"></div>
<div style="left:82px;top:522px;width:1px;height:5px;background:#2a4ab0"></div>
<svg style="left:92px;top:540px;" width="16" height="16" viewBox="0 0 16 16"><rect x="0.5" y="4" width="6.5" height="11" fill="#3c3c3c" /><rect x="1.5" y="6" width="4.5" height="1.3" fill="#9a9a9a" /><rect x="1.5" y="8.5" width="4.5" height="1.3" fill="#9a9a9a" /><path d="M3.5 1.5l4 2.5l-4 2.5z" fill="#22a838" stroke="none" stroke-width="1" /><path d="M7 0h6l3 3v6h-9z" fill="#fff" stroke="#9a9a9a" stroke-width="0.8" /><path d="M13 0v3h3" fill="#dfe4ee" stroke="#9a9a9a" stroke-width="0.6" /><rect x="7.5" y="5.5" width="8" height="3" fill="#dde3ef" /><path d="M8.25 4.5h2.35M12.4 4.5h2.35M9.95 2.0v5M13.05 2.0v5" fill="none" stroke="#e81010" stroke-width="1.3" /><rect x="7" y="10" width="3" height="2" fill="#777" /></svg>
<div class="nv" style="left:113px;top:538px;height:20px;line-height:20px;font-size:15px;color:#fff;white-space:nowrap;"><span class="ls">MAIN_10 </span>自动</div>
<div style="left:78px;top:544px;width:9px;height:9px;background:linear-gradient(#fff,#d4dae6);border:1px solid #a8b0c2"></div>
<div style="left:80px;top:548px;width:5px;height:1px;background:#2a4ab0"></div>
<svg style="left:106px;top:564px;" width="16" height="16" viewBox="0 0 16 16"><path d="M0.5 4.5h5l1.5-1.5h8.5v11.5h-15z" fill="#f2c24a" stroke="#a87a10" stroke-width="0.8" /><path d="M0.5 14.5l2-7.5h13l-0 7.5z" fill="#ffe07a" stroke="#b88a18" stroke-width="0.6" /><path d="M4 0h7l3 3v9.5h-10z" fill="#fff" stroke="#9a9a9a" stroke-width="0.8" /><path d="M11 0v3h3" fill="#dfe4ee" stroke="#9a9a9a" stroke-width="0.6" /><rect x="4.5" y="9.0" width="9" height="3" fill="#dde3ef" /><path d="M5.25 6.25h2.85M9.9 6.25h2.85M7.449999999999999 3.75v5M10.55 3.75v5" fill="none" stroke="#e81010" stroke-width="1.3" /></svg>
<div class="nv" style="left:126px;top:562px;height:20px;line-height:20px;font-size:15px;color:#fff;white-space:nowrap;">自动</div>
<div style="left:92px;top:568px;width:9px;height:9px;background:linear-gradient(#fff,#d4dae6);border:1px solid #a8b0c2"></div>
<div style="left:94px;top:572px;width:5px;height:1px;background:#2a4ab0"></div>
<svg style="left:120px;top:588px;" width="16" height="16" viewBox="0 0 16 16"><rect x="1.5" y="0.5" width="8" height="5" fill="#9fd0ff" stroke="#3a60c0" stroke-width="0.7" rx="1.5"/><rect x="3.5" y="4.5" width="12" height="10" fill="#fff" stroke="#3030c8" stroke-width="1.2"/><path d="M3.5 8h12M3.5 11h12M8 4.5v10" fill="none" stroke="#3030c8" stroke-width="1" /></svg>
<div class="nv" style="left:140px;top:586px;height:20px;line-height:20px;font-size:15px;color:#fff;white-space:nowrap;">局部标签</div>
<svg style="left:120px;top:612px;" width="16" height="16" viewBox="0 0 16 16"><path d="M2 0.5h7.5l3 3v11h-10.5z" fill="#fff" stroke="#9a9a9a" stroke-width="0.8" /><path d="M9.5 0.5v3h3" fill="#dfe4ee" stroke="#9a9a9a" stroke-width="0.6" /><rect x="2.5" y="11.0" width="9.5" height="3" fill="#dde3ef" /><path d="M3.25 7.5h3.1M8.15 7.5h3.1M5.699999999999999 5.0v5M8.8 5.0v5" fill="none" stroke="#e81010" stroke-width="1.3" /></svg>
<div class="nv" style="left:140px;top:610px;height:20px;line-height:20px;font-size:15px;color:#fff;white-space:nowrap;">程序本体</div>
<svg style="left:92px;top:636px;" width="16" height="16" viewBox="0 0 16 16"><rect x="0.5" y="4" width="6.5" height="11" fill="#3c3c3c" /><rect x="1.5" y="6" width="4.5" height="1.3" fill="#9a9a9a" /><rect x="1.5" y="8.5" width="4.5" height="1.3" fill="#9a9a9a" /><path d="M3.5 1.5l4 2.5l-4 2.5z" fill="#22a838" stroke="none" stroke-width="1" /><path d="M7 0h6l3 3v6h-9z" fill="#fff" stroke="#9a9a9a" stroke-width="0.8" /><path d="M13 0v3h3" fill="#dfe4ee" stroke="#9a9a9a" stroke-width="0.6" /><rect x="7.5" y="5.5" width="8" height="3" fill="#dde3ef" /><path d="M8.25 4.5h2.35M12.4 4.5h2.35M9.95 2.0v5M13.05 2.0v5" fill="none" stroke="#e81010" stroke-width="1.3" /><rect x="7" y="10" width="3" height="2" fill="#777" /></svg>
<div class="nv" style="left:113px;top:634px;height:20px;line-height:20px;font-size:15px;color:#fff;white-space:nowrap;"><span class="ls">MAIN_11</span></div>
<div style="left:78px;top:640px;width:9px;height:9px;background:linear-gradient(#fff,#d4dae6);border:1px solid #a8b0c2"></div>
<div style="left:80px;top:644px;width:5px;height:1px;background:#2a4ab0"></div>
<div style="left:82px;top:642px;width:1px;height:5px;background:#2a4ab0"></div>
<svg style="left:78px;top:660px;" width="16" height="16" viewBox="0 0 16 16"><path d="M0.5 4.5h5l1.5-1.5h8.5v11.5h-15z" fill="#f2c24a" stroke="#a87a10" stroke-width="0.8" /><path d="M0.5 14.5l2-7.5h13l-0 7.5z" fill="#ffe07a" stroke="#b88a18" stroke-width="0.6" /><rect x="4.5" y="1" width="3" height="12" fill="#ee4a52" stroke="#801010" stroke-width="0.5"/><rect x="8" y="0.5" width="3" height="12.5" fill="#8a8a8a" stroke="#333" stroke-width="0.5"/><rect x="11.3" y="2" width="2.6" height="11" fill="#d8d8d8" stroke="#555" stroke-width="0.5"/><path d="M0.5 14.5l0.5-4h3v4z" fill="#ffd860" stroke="none" stroke-width="1" /></svg>
<div class="nv" style="left:98px;top:658px;height:20px;line-height:20px;font-size:15px;color:#fff;white-space:nowrap;">恒定周期</div>
<svg style="left:78px;top:684px;" width="16" height="16" viewBox="0 0 16 16"><path d="M0.5 4.5h5l1.5-1.5h8.5v11.5h-15z" fill="#f2c24a" stroke="#a87a10" stroke-width="0.8" /><path d="M0.5 14.5l2-7.5h13l-0 7.5z" fill="#ffe07a" stroke="#b88a18" stroke-width="0.6" /><rect x="4.5" y="1" width="3" height="12" fill="#ee4a52" stroke="#801010" stroke-width="0.5"/><rect x="8" y="0.5" width="3" height="12.5" fill="#8a8a8a" stroke="#333" stroke-width="0.5"/><rect x="11.3" y="2" width="2.6" height="11" fill="#d8d8d8" stroke="#555" stroke-width="0.5"/><path d="M0.5 14.5l0.5-4h3v4z" fill="#ffd860" stroke="none" stroke-width="1" /></svg>
<div class="nv" style="left:98px;top:682px;height:20px;line-height:20px;font-size:15px;color:#fff;white-space:nowrap;">事件</div>
<svg style="left:78px;top:708px;" width="16" height="16" viewBox="0 0 16 16"><path d="M0.5 4.5h5l1.5-1.5h8.5v11.5h-15z" fill="#f2c24a" stroke="#a87a10" stroke-width="0.8" /><path d="M0.5 14.5l2-7.5h13l-0 7.5z" fill="#ffe07a" stroke="#b88a18" stroke-width="0.6" /><rect x="4.5" y="1" width="3" height="12" fill="#ee4a52" stroke="#801010" stroke-width="0.5"/><rect x="8" y="0.5" width="3" height="12.5" fill="#8a8a8a" stroke="#333" stroke-width="0.5"/><rect x="11.3" y="2" width="2.6" height="11" fill="#d8d8d8" stroke="#555" stroke-width="0.5"/><path d="M0.5 14.5l0.5-4h3v4z" fill="#ffd860" stroke="none" stroke-width="1" /></svg>
<div class="nv" style="left:98px;top:706px;height:20px;line-height:20px;font-size:15px;color:#fff;white-space:nowrap;">待机</div>
<svg style="left:78px;top:732px;" width="16" height="16" viewBox="0 0 16 16"><path d="M0.5 4.5h5l1.5-1.5h8.5v11.5h-15z" fill="#f2c24a" stroke="#a87a10" stroke-width="0.8" /><path d="M0.5 14.5l2-7.5h13l-0 7.5z" fill="#ffe07a" stroke="#b88a18" stroke-width="0.6" /><rect x="4.5" y="1" width="3" height="12" fill="#ee4a52" stroke="#801010" stroke-width="0.5"/><rect x="8" y="0.5" width="3" height="12.5" fill="#8a8a8a" stroke="#333" stroke-width="0.5"/><rect x="11.3" y="2" width="2.6" height="11" fill="#d8d8d8" stroke="#555" stroke-width="0.5"/><path d="M0.5 14.5l0.5-4h3v4z" fill="#ffd860" stroke="none" stroke-width="1" /></svg>
<div class="nv" style="left:98px;top:730px;height:20px;line-height:20px;font-size:15px;color:#fff;white-space:nowrap;">无执行类型指定</div>
<svg style="left:78px;top:756px;" width="16" height="16" viewBox="0 0 16 16"><path d="M0.5 4.5h5l1.5-1.5h8.5v11.5h-15z" fill="#f2c24a" stroke="#a87a10" stroke-width="0.8" /><path d="M0.5 14.5l2-7.5h13l-0 7.5z" fill="#ffe07a" stroke="#b88a18" stroke-width="0.6" /><rect x="4" y="1" width="6" height="10" fill="#c8c8c8" stroke="#888" stroke-width="0.6"/><rect x="7" y="3" width="6" height="10" fill="#dcdcdc" stroke="#999" stroke-width="0.6"/><rect x="0.8" y="8" width="14.5" height="6.3" fill="#f2e3a8" /></svg>
<div class="nv" style="left:98px;top:754px;height:20px;line-height:20px;font-size:15px;color:#fff;white-space:nowrap;">未登录程序</div>
<svg style="left:64px;top:780px;" width="16" height="16" viewBox="0 0 16 16"><path d="M0.5 4.5h5l1.5-1.5h8.5v11.5h-15z" fill="#f2c24a" stroke="#a87a10" stroke-width="0.8" /><path d="M0.5 14.5l2-7.5h13l-0 7.5z" fill="#ffe07a" stroke="#b88a18" stroke-width="0.6" /><rect x="4" y="3.5" width="10" height="8" fill="#2a9a3a" stroke="#155a20" stroke-width="0.7"/><rect x="6.5" y="1.2" width="6" height="2.8" fill="#3a60d0" /><path d="M2 7h2M2 10h2M14 8.5h1.5" fill="none" stroke="#155a20" stroke-width="1" /></svg>
<div class="nv" style="left:84px;top:778px;height:20px;line-height:20px;font-size:15px;color:#fff;white-space:nowrap;">FB/FUN</div>
<svg style="left:64px;top:804px;" width="16" height="16" viewBox="0 0 16 16"><path d="M0.5 4.5h5l1.5-1.5h8.5v11.5h-15z" fill="#f2c24a" stroke="#a87a10" stroke-width="0.8" /><path d="M0.5 14.5l2-7.5h13l-0 7.5z" fill="#ffe07a" stroke="#b88a18" stroke-width="0.6" /><rect x="5" y="5" width="10" height="8" fill="#fff" stroke="#3030c8" stroke-width="1"/><path d="M5 8h10M5 10.5h10M9 5v8" fill="none" stroke="#3030c8" stroke-width="0.9" /><circle cx="8.5" cy="3.5" r="3" fill="#38b048" stroke="#1a6a28" stroke-width="0.6"/><path d="M6.5 3.5h4M8.5 1v5" fill="none" stroke="#c8f0d0" stroke-width="0.6" /></svg>
<div class="nv" style="left:84px;top:802px;height:20px;line-height:20px;font-size:15px;color:#fff;white-space:nowrap;">标签</div>
<div style="left:50px;top:808px;width:9px;height:9px;background:linear-gradient(#fff,#d4dae6);border:1px solid #a8b0c2"></div>
<div style="left:52px;top:812px;width:5px;height:1px;background:#2a4ab0"></div>
<div style="left:54px;top:810px;width:1px;height:5px;background:#2a4ab0"></div>
<svg style="left:64px;top:828px;" width="16" height="16" viewBox="0 0 16 16"><path d="M0.5 4.5h5l1.5-1.5h8.5v11.5h-15z" fill="#f2c24a" stroke="#a87a10" stroke-width="0.8" /><path d="M0.5 14.5l2-7.5h13l-0 7.5z" fill="#ffe07a" stroke="#b88a18" stroke-width="0.6" /><rect x="3" y="2" width="5" height="5" fill="#f07090" stroke="#a03050" stroke-width="0.5"/><rect x="8.5" y="0.8" width="5" height="5" fill="#68c868" stroke="#2a7a2a" stroke-width="0.5"/><rect x="2" y="7.5" width="12.5" height="6.5" fill="#f6e08a" stroke="#c8a838" stroke-width="0.5"/></svg>
<div class="nv" style="left:84px;top:826px;height:20px;line-height:20px;font-size:15px;color:#fff;white-space:nowrap;">软元件</div>
<div style="left:50px;top:832px;width:9px;height:9px;background:linear-gradient(#fff,#d4dae6);border:1px solid #a8b0c2"></div>
<div style="left:52px;top:836px;width:5px;height:1px;background:#2a4ab0"></div>
<div style="left:54px;top:834px;width:1px;height:5px;background:#2a4ab0"></div>
<svg style="left:64px;top:852px;" width="16" height="16" viewBox="0 0 16 16"><path d="M0.5 4.5h5l1.5-1.5h8.5v11.5h-15z" fill="#f2c24a" stroke="#a87a10" stroke-width="0.8" /><path d="M0.5 14.5l2-7.5h13l-0 7.5z" fill="#ffe07a" stroke="#b88a18" stroke-width="0.6" /><rect x="4" y="1" width="6" height="6" fill="#333" /><rect x="5" y="2" width="4" height="2" fill="#999" /><path d="M5 13.5l7-8" fill="none" stroke="#1848c8" stroke-width="2.2" /><circle cx="12.5" cy="4.5" r="2.2" fill="none" stroke="#1848c8" stroke-width="1.4"/><rect x="10" y="9" width="4" height="5" fill="#444" /></svg>
<div class="nv" style="left:84px;top:850px;height:20px;line-height:20px;font-size:15px;color:#fff;white-space:nowrap;">参数</div>
<div style="left:50px;top:856px;width:9px;height:9px;background:linear-gradient(#fff,#d4dae6);border:1px solid #a8b0c2"></div>
<div style="left:52px;top:860px;width:5px;height:1px;background:#2a4ab0"></div>
<div style="left:54px;top:858px;width:1px;height:5px;background:#2a4ab0"></div>
<div style="left:45px;top:926px;width:263px;height:4px;background:#fdfdfe"></div>
<div style="left:45px;top:930px;width:263px;height:24px;background:#2e3f61;background-image:radial-gradient(#3a4c70 0.6px,transparent 0.8px);background-size:3px 3px"></div>
<div style="left:45px;top:929px;width:58px;height:24px;background:#fff;border-radius:0 0 4px 4px"></div>
<svg style="left:50px;top:932px;" width="17" height="16" viewBox="0 0 17 16"><path d="M4 5v8.500h6M4 8h6" fill="none" stroke="#d8d8d8" stroke-width="1" /><rect x="1" y="1.5" width="5.5" height="4" fill="#f0a818" stroke="#a86a00" stroke-width="0.600"/><rect x="1" y="0.5" width="3" height="1.5" fill="#f0a818" stroke="#a86a00" stroke-width="0.500"/><rect x="10" y="6" width="5.5" height="4" fill="#f0a818" stroke="#a86a00" stroke-width="0.600"/><rect x="10" y="5" width="3" height="1.5" fill="#f0a818" stroke="#a86a00" stroke-width="0.500"/><rect x="10" y="11.5" width="5.5" height="4" fill="#f0a818" stroke="#a86a00" stroke-width="0.600"/><rect x="10" y="10.5" width="3" height="1.5" fill="#f0a818" stroke="#a86a00" stroke-width="0.500"/></svg>
<div style="left:69px;top:932px;height:20px;line-height:20px;font-size:15px;color:#000;white-space:nowrap;">导航</div>
<svg style="left:109px;top:933px;" width="17" height="16" viewBox="0 0 17 16"><rect x="0.5" y="3" width="7" height="11" fill="none" stroke="#20a030" stroke-width="1"/><rect x="4" y="0.5" width="9" height="7" fill="#e4ecf4" stroke="#555" stroke-width="0.900"/><rect x="9" y="4" width="6.5" height="11" fill="#3a3a3a" /><rect x="2.5" y="7" width="9" height="3.5" fill="#222" /><rect x="2" y="10.5" width="9" height="3" fill="#d0d0d0" /><rect x="10" y="6" width="4" height="1" fill="#9a9a9a" /><rect x="10" y="8.5" width="4" height="1" fill="#9a9a9a" /></svg>
<div style="left:127px;top:932px;height:20px;line-height:20px;font-size:15px;color:#fff;white-space:nowrap;">连接目标</div>
<div style="left:308px;top:116px;width:1320px;height:26px;background:#2e3f61;background-image:radial-gradient(#3a4c70 0.6px,transparent 0.8px);background-size:3px 3px"></div>
<div style="left:308px;top:142px;width:5px;height:812px;background:#2e3f61"></div>
<div style="left:1621px;top:142px;width:7px;height:812px;background:#2e3f61"></div>
<div style="left:313px;top:116px;width:220px;height:27px;background:linear-gradient(#fffbf0 0%,#fff1cc 48%,#ffe6a3 52%,#ffe6a3 100%);border-radius:4px 4px 0 0"></div>
<svg style="left:320px;top:122px;" width="12" height="15" viewBox="0 0 12 15"><rect x="0" y="14" width="12" height="1.2" fill="#111" /><path d="M0.5 0.5h8l3 3v10.500h-11z" fill="#fff" stroke="#c8c8c8" stroke-width="0.8" /><path d="M8.500 0.500v3h3" fill="#e4e4e4" stroke="#c0c0c0" stroke-width="0.6" /><path d="M1.0 8h4.1M6.9 8h4.1M4.1 4.5v7M7.9 4.5v7" fill="none" stroke="#f00808" stroke-width="2" /></svg>
<div class="t1" style="left:338px;top:120px;height:20px;line-height:20px;font-size:15px;color:#000;white-space:nowrap;">MC:N0 自动 [PRG] [LD]...</div>
<svg style="left:519px;top:125px;" width="10" height="9" viewBox="0 0 10 9"><path d="M1 1l7.500 7M8.500 1l-7.500 7" fill="none" stroke="#6b5a2a" stroke-width="1.4" /></svg>
<svg style="left:540px;top:122px;" width="12" height="15" viewBox="0 0 12 15"><rect x="0" y="14" width="12" height="1.2" fill="#111" /><path d="M0.5 0.5h8l3 3v10.500h-11z" fill="#fff" stroke="#c8c8c8" stroke-width="0.8" /><path d="M8.500 0.500v3h3" fill="#e4e4e4" stroke="#c0c0c0" stroke-width="0.6" /><path d="M1.0 8h4.1M6.9 8h4.1M4.1 4.5v7M7.9 4.5v7" fill="none" stroke="#f00808" stroke-width="2" /></svg>
<div class="t2" style="left:557px;top:120px;height:20px;line-height:20px;font-size:15px;color:#fff;white-space:nowrap;">伺服 [PRG] [LD] 501步</div>
<svg style="left:738px;top:122px;" width="12" height="15" viewBox="0 0 12 15"><rect x="0" y="14" width="12" height="1.2" fill="#111" /><path d="M0.5 0.5h8l3 3v10.500h-11z" fill="#fff" stroke="#c8c8c8" stroke-width="0.8" /><path d="M8.500 0.500v3h3" fill="#e4e4e4" stroke="#c0c0c0" stroke-width="0.6" /><path d="M1.0 8h4.1M6.9 8h4.1M4.1 4.5v7M7.9 4.5v7" fill="none" stroke="#f00808" stroke-width="2" /></svg>
<div class="t2" style="left:755px;top:120px;height:20px;line-height:20px;font-size:15px;color:#fff;white-space:nowrap;">交握 [PRG] [LD] 598步</div>
<svg style="left:936px;top:122px;" width="12" height="15" viewBox="0 0 12 15"><rect x="0" y="14" width="12" height="1.2" fill="#111" /><path d="M0.5 0.5h8l3 3v10.500h-11z" fill="#fff" stroke="#c8c8c8" stroke-width="0.8" /><path d="M8.500 0.500v3h3" fill="#e4e4e4" stroke="#c0c0c0" stroke-width="0.6" /><path d="M1.0 8h4.1M6.9 8h4.1M4.1 4.5v7M7.9 4.5v7" fill="none" stroke="#f00808" stroke-width="2" /></svg>
<div class="t2" style="left:953px;top:120px;height:20px;line-height:20px;font-size:15px;color:#fff;white-space:nowrap;">输出 [PRG] [LD] 1065步</div>
<svg style="left:1143px;top:122px;" width="12" height="15" viewBox="0 0 12 15"><rect x="0" y="14" width="12" height="1.2" fill="#111" /><path d="M0.5 0.5h8l3 3v10.500h-11z" fill="#fff" stroke="#c8c8c8" stroke-width="0.8" /><path d="M8.500 0.500v3h3" fill="#e4e4e4" stroke="#c0c0c0" stroke-width="0.6" /><path d="M1.0 8h4.1M6.9 8h4.1M4.1 4.5v7M7.9 4.5v7" fill="none" stroke="#f00808" stroke-width="2" /></svg>
<div class="t2" style="left:1160px;top:120px;height:20px;line-height:20px;font-size:15px;color:#fff;white-space:nowrap;">异常 [PRG] [LD] 1421步</div>
<svg style="left:1350px;top:122px;" width="12" height="15" viewBox="0 0 12 15"><rect x="0" y="14" width="12" height="1.2" fill="#111" /><path d="M0.5 0.5h8l3 3v10.500h-11z" fill="#fff" stroke="#c8c8c8" stroke-width="0.8" /><path d="M8.500 0.500v3h3" fill="#e4e4e4" stroke="#c0c0c0" stroke-width="0.6" /><path d="M1.0 8h4.1M6.9 8h4.1M4.1 4.5v7M7.9 4.5v7" fill="none" stroke="#f00808" stroke-width="2" /></svg>
<div class="t2" style="left:1367px;top:120px;height:20px;line-height:20px;font-size:15px;color:#fff;white-space:nowrap;">表单 [PRG] [LD] 117步</div>
<svg style="left:1546px;top:122px;" width="15" height="14" viewBox="0 0 15 14"><rect x="0" y="0" width="15" height="14" fill="#111" /><rect x="1" y="5" width="4" height="8" fill="#f05050" /><rect x="5.5" y="3" width="3" height="10" fill="#bbb" /><rect x="9" y="3" width="5" height="10" fill="#109030" /><path d="M1 1.500h13" fill="none" stroke="#fff" stroke-width="1" stroke-dasharray="2 1"/></svg>
<div style="left:1565px;top:120px;height:20px;line-height:20px;font-size:15px;color:#fff;white-space:nowrap;">模</div>
<svg style="left:1585px;top:123px;" width="6" height="9" viewBox="0 0 6 9"><path d="M5.500 0.500v8l-5-4z" fill="none" stroke="#c5cde0" stroke-width="1" /></svg>
<svg style="left:1599px;top:123px;" width="6" height="9" viewBox="0 0 6 9"><path d="M0.500 0.500v8l5-4z" fill="#c5cde0" stroke="none" stroke-width="1" /></svg>
<svg style="left:1611px;top:124px;" width="8" height="8" viewBox="0 0 8 8"><rect x="0" y="0" width="8" height="1.6" fill="#c5cde0" /><path d="M0 3.500h8l-4 4z" fill="#c5cde0" stroke="none" stroke-width="1" /></svg>
<div style="left:313px;top:142px;width:1308px;height:812px;background:#ffe9a8"></div>
<div style="left:314px;top:145px;width:1306px;height:805px;background:#f0f0f0;border-bottom:1px solid #fff;border-top:2px solid #6e6e6e;border-left:2px solid #6e6e6e;border-right:1px solid #fff"></div>
<div style="left:316px;top:147px;width:1302px;height:1px;background:#a9a9a9"></div>
<div style="left:316px;top:147px;width:2px;height:803px;background:#a9a9a9"></div>
<div style="left:318px;top:148px;width:1279px;height:778px;background:#fff"></div>
<div style="left:318px;top:148px;width:1261px;height:22px;background:linear-gradient(#f4f9ff 0%,#dbe9fb 55%,#c4dbfa 100%);border-bottom:1px solid #6f9ee0"></div>
<div style="left:321px;top:149px;height:20px;line-height:20px;font-size:15px;color:#000;white-space:nowrap;">写入</div>
<div style="left:386px;top:151px;width:1px;height:14px;border-left:1px dotted #fff"></div>
<svg style="left:401px;top:158px;" width="7" height="4" viewBox="0 0 7 4"><path d="M0 0h7l-3.500 4z" fill="#4a70b8" stroke="none" stroke-width="1" /></svg>
<div style="left:416px;top:148px;width:63px;height:20px;line-height:20px;font-size:15px;color:#000;white-space:nowrap;text-align:center">1</div>
<div style="left:479px;top:149px;width:1px;height:20px;background:#6f9ee0"></div>
<div style="left:479px;top:148px;width:63px;height:20px;line-height:20px;font-size:15px;color:#000;white-space:nowrap;text-align:center">2</div>
<div style="left:542px;top:149px;width:1px;height:20px;background:#6f9ee0"></div>
<div style="left:542px;top:148px;width:63px;height:20px;line-height:20px;font-size:15px;color:#000;white-space:nowrap;text-align:center">3</div>
<div style="left:605px;top:149px;width:1px;height:20px;background:#6f9ee0"></div>
<div style="left:605px;top:148px;width:63px;height:20px;line-height:20px;font-size:15px;color:#000;white-space:nowrap;text-align:center">4</div>
<div style="left:668px;top:149px;width:1px;height:20px;background:#6f9ee0"></div>
<div style="left:668px;top:148px;width:63px;height:20px;line-height:20px;font-size:15px;color:#000;white-space:nowrap;text-align:center">5</div>
<div style="left:731px;top:149px;width:1px;height:20px;background:#6f9ee0"></div>
<div style="left:731px;top:148px;width:63px;height:20px;line-height:20px;font-size:15px;color:#000;white-space:nowrap;text-align:center">6</div>
<div style="left:794px;top:149px;width:1px;height:20px;background:#6f9ee0"></div>
<div style="left:794px;top:148px;width:63px;height:20px;line-height:20px;font-size:15px;color:#000;white-space:nowrap;text-align:center">7</div>
<div style="left:857px;top:149px;width:1px;height:20px;background:#6f9ee0"></div>
<div style="left:857px;top:148px;width:63px;height:20px;line-height:20px;font-size:15px;color:#000;white-space:nowrap;text-align:center">8</div>
<div style="left:920px;top:149px;width:1px;height:20px;background:#6f9ee0"></div>
<div style="left:920px;top:148px;width:63px;height:20px;line-height:20px;font-size:15px;color:#000;white-space:nowrap;text-align:center">9</div>
<div style="left:983px;top:149px;width:1px;height:20px;background:#6f9ee0"></div>
<div style="left:983px;top:148px;width:63px;height:20px;line-height:20px;font-size:15px;color:#000;white-space:nowrap;text-align:center">10</div>
<div style="left:1046px;top:149px;width:1px;height:20px;background:#6f9ee0"></div>
<div style="left:1046px;top:148px;width:63px;height:20px;line-height:20px;font-size:15px;color:#000;white-space:nowrap;text-align:center">11</div>
<div style="left:1109px;top:149px;width:1px;height:20px;background:#6f9ee0"></div>
<div style="left:1109px;top:148px;width:63px;height:20px;line-height:20px;font-size:15px;color:#000;white-space:nowrap;text-align:center">12</div>
<div style="left:1172px;top:149px;width:1px;height:20px;background:#6f9ee0"></div>
<div style="left:1172px;top:148px;width:63px;height:20px;line-height:20px;font-size:15px;color:#000;white-space:nowrap;text-align:center">13</div>
<div style="left:1235px;top:149px;width:1px;height:20px;background:#6f9ee0"></div>
<div style="left:1235px;top:148px;width:63px;height:20px;line-height:20px;font-size:15px;color:#000;white-space:nowrap;text-align:center">14</div>
<div style="left:1298px;top:149px;width:1px;height:20px;background:#6f9ee0"></div>
<div style="left:1298px;top:148px;width:63px;height:20px;line-height:20px;font-size:15px;color:#000;white-space:nowrap;text-align:center">15</div>
<div style="left:1361px;top:149px;width:1px;height:20px;background:#6f9ee0"></div>
<div style="left:1361px;top:148px;width:63px;height:20px;line-height:20px;font-size:15px;color:#000;white-space:nowrap;text-align:center">16</div>
<div style="left:1424px;top:149px;width:1px;height:20px;background:#6f9ee0"></div>
<div style="left:1424px;top:148px;width:63px;height:20px;line-height:20px;font-size:15px;color:#000;white-space:nowrap;text-align:center">17</div>
<div style="left:1487px;top:149px;width:1px;height:20px;background:#6f9ee0"></div>
<div style="left:1487px;top:148px;width:91px;height:20px;line-height:20px;font-size:15px;color:#000;white-space:nowrap;text-align:center">18</div>
<div style="left:1578px;top:148px;width:1px;height:22px;background:#6f9ee0"></div>
<div style="left:318px;top:170px;width:37px;height:756px;background:linear-gradient(90deg,#eef5ff,#cfe0fb);border-right:1px solid #6f9ee0"></div>
<div style="left:318px;top:170px;width:36px;height:117px;background:linear-gradient(180deg,#f3f8ff 0%,#e2edfd 40%,#c2d9fa 100%);background-size:100% 117px;background-repeat:no-repeat;border-top:1px solid #6f9ee0"></div>
<div style="left:318px;top:287px;width:36px;height:18px;background:linear-gradient(180deg,#f3f8ff 0%,#e2edfd 40%,#c2d9fa 100%);background-size:100% 18px;background-repeat:no-repeat;border-top:1px solid #6f9ee0"></div>
<div style="left:318px;top:305px;width:36px;height:117px;background:linear-gradient(180deg,#f3f8ff 0%,#e2edfd 40%,#c2d9fa 100%);background-size:100% 117px;background-repeat:no-repeat;border-top:1px solid #6f9ee0"></div>
<div style="left:318px;top:422px;width:36px;height:117px;background:linear-gradient(180deg,#f3f8ff 0%,#e2edfd 40%,#c2d9fa 100%);background-size:100% 117px;background-repeat:no-repeat;border-top:1px solid #6f9ee0"></div>
<div style="left:318px;top:539px;width:36px;height:117px;background:linear-gradient(180deg,#f3f8ff 0%,#e2edfd 40%,#c2d9fa 100%);background-size:100% 117px;background-repeat:no-repeat;border-top:1px solid #6f9ee0"></div>
<div style="left:318px;top:656px;width:36px;height:117px;background:linear-gradient(180deg,#f3f8ff 0%,#e2edfd 40%,#c2d9fa 100%);background-size:100% 117px;background-repeat:no-repeat;border-top:1px solid #6f9ee0"></div>
<div style="left:318px;top:773px;width:36px;height:117px;background:linear-gradient(180deg,#f3f8ff 0%,#e2edfd 40%,#c2d9fa 100%);background-size:100% 117px;background-repeat:no-repeat;border-top:1px solid #6f9ee0"></div>
<div style="left:318px;top:890px;width:36px;height:36px;background:linear-gradient(180deg,#f3f8ff 0%,#e2edfd 40%,#c2d9fa 100%);background-size:100% 117px;background-repeat:no-repeat;border-top:1px solid #6f9ee0"></div>
<div style="left:321px;top:705px;height:20px;line-height:20px;font-size:15px;color:#000;white-space:nowrap;">293</div>
<div style="left:321px;top:821px;height:20px;line-height:20px;font-size:15px;color:#000;white-space:nowrap;">294</div>
<div style="left:385px;top:170px;width:1px;height:756px;border-left:1px dotted #c4c4c4"></div>
<div style="left:479px;top:170px;width:1px;height:756px;border-left:1px dotted #c4c4c4"></div>
<div style="left:542px;top:170px;width:1px;height:756px;border-left:1px dotted #c4c4c4"></div>
<div style="left:605px;top:170px;width:1px;height:756px;border-left:1px dotted #c4c4c4"></div>
<div style="left:668px;top:170px;width:1px;height:756px;border-left:1px dotted #c4c4c4"></div>
<div style="left:731px;top:170px;width:1px;height:756px;border-left:1px dotted #c4c4c4"></div>
<div style="left:794px;top:170px;width:1px;height:756px;border-left:1px dotted #c4c4c4"></div>
<div style="left:857px;top:170px;width:1px;height:756px;border-left:1px dotted #c4c4c4"></div>
<div style="left:920px;top:170px;width:1px;height:756px;border-left:1px dotted #c4c4c4"></div>
<div style="left:983px;top:170px;width:1px;height:756px;border-left:1px dotted #c4c4c4"></div>
<div style="left:1046px;top:170px;width:1px;height:756px;border-left:1px dotted #c4c4c4"></div>
<div style="left:1109px;top:170px;width:1px;height:756px;border-left:1px dotted #c4c4c4"></div>
<div style="left:1172px;top:170px;width:1px;height:756px;border-left:1px dotted #c4c4c4"></div>
<div style="left:1235px;top:170px;width:1px;height:756px;border-left:1px dotted #c4c4c4"></div>
<div style="left:1298px;top:170px;width:1px;height:756px;border-left:1px dotted #c4c4c4"></div>
<div style="left:1361px;top:170px;width:1px;height:756px;border-left:1px dotted #c4c4c4"></div>
<div style="left:1424px;top:170px;width:1px;height:756px;border-left:1px dotted #c4c4c4"></div>
<div style="left:1487px;top:170px;width:1px;height:756px;border-left:1px dotted #c4c4c4"></div>
<div style="left:355px;top:422px;width:1223px;height:1px;border-top:1px dotted #c4c4c4"></div>
<div style="left:355px;top:539px;width:1223px;height:1px;border-top:1px dotted #c4c4c4"></div>
<div style="left:355px;top:656px;width:1223px;height:1px;border-top:1px dotted #c4c4c4"></div>
<div style="left:355px;top:773px;width:1223px;height:1px;border-top:1px dotted #c4c4c4"></div>
<div style="left:355px;top:890px;width:1223px;height:1px;border-top:1px dotted #c4c4c4"></div>
<div style="left:355px;top:287px;width:1223px;height:18px;background:#9ffdfd;border:1px solid #1a9a24"></div>
<div style="left:417px;top:305px;width:1px;height:621px;background:#000"></div>
<div style="left:1577px;top:170px;width:1px;height:756px;background:#000"></div>
<div style="left:886px;top:328px;width:641px;height:1px;background:#000"></div>
<div style="left:1540px;top:328px;width:37px;height:1px;background:#000"></div>
<svg style="left:1526px;top:321px;" width="15" height="15" viewBox="0 0 15 15"><circle cx="7.5" cy="7.5" r="6.2" fill="#fff" stroke="#000" stroke-width="1.1"/></svg>
<div style="left:1488px;top:306px;width:92px;height:14px;line-height:14px;font-size:12.8px;color:#3c3c3c;white-space:nowrap;text-align:center">M2322</div>
<div class="cm" style="left:1490px;top:359px;height:15px;line-height:15px;font-size:12.8px;color:#0a8a14;white-space:nowrap;">C01/02_Auto</div>
<div class="cm" style="left:1490px;top:374px;height:15px;line-height:15px;font-size:12.8px;color:#0a8a14;white-space:nowrap;">Select</div>
<div class="cm" style="left:1490px;top:389px;height:15px;line-height:15px;font-size:12.8px;color:#0a8a14;white-space:nowrap;">Degree 0</div>
<div style="left:886px;top:562px;width:641px;height:1px;background:#000"></div>
<div style="left:1540px;top:562px;width:37px;height:1px;background:#000"></div>
<svg style="left:1526px;top:555px;" width="15" height="15" viewBox="0 0 15 15"><circle cx="7.5" cy="7.5" r="6.2" fill="#fff" stroke="#000" stroke-width="1.1"/></svg>
<div style="left:1488px;top:540px;width:92px;height:14px;line-height:14px;font-size:12.8px;color:#3c3c3c;white-space:nowrap;text-align:center">M2323</div>
<div class="cm" style="left:1490px;top:593px;height:15px;line-height:15px;font-size:12.8px;color:#0a8a14;white-space:nowrap;">C01_Auto</div>
<div class="cm" style="left:1490px;top:608px;height:15px;line-height:15px;font-size:12.8px;color:#0a8a14;white-space:nowrap;">Wait RB2</div>
<div style="left:886px;top:796px;width:641px;height:1px;background:#000"></div>
<div style="left:1540px;top:796px;width:37px;height:1px;background:#000"></div>
<svg style="left:1526px;top:789px;" width="15" height="15" viewBox="0 0 15 15"><circle cx="7.5" cy="7.5" r="6.2" fill="#fff" stroke="#000" stroke-width="1.1"/></svg>
<div style="left:1488px;top:774px;width:92px;height:14px;line-height:14px;font-size:12.8px;color:#3c3c3c;white-space:nowrap;text-align:center">M2324</div>
<div class="cm" style="left:1490px;top:827px;height:15px;line-height:15px;font-size:12.8px;color:#0a8a14;white-space:nowrap;">C01_Auto</div>
<div class="cm" style="left:1490px;top:842px;height:15px;line-height:15px;font-size:12.8px;color:#0a8a14;white-space:nowrap;">Processing</div>
<div style="left:417px;top:796px;width:25px;height:1px;background:#000"></div>
<div style="left:455px;top:796px;width:50px;height:1px;background:#000"></div>
<div style="left:518px;top:796px;width:50px;height:1px;background:#000"></div>
<div style="left:581px;top:796px;width:305px;height:1px;background:#000"></div>
<div style="left:442px;top:790px;width:1px;height:13px;background:#000"></div>
<div style="left:454px;top:790px;width:1px;height:13px;background:#000"></div>
<div style="left:505px;top:790px;width:1px;height:13px;background:#000"></div>
<div style="left:517px;top:790px;width:1px;height:13px;background:#000"></div>
<div style="left:568px;top:790px;width:1px;height:13px;background:#000"></div>
<div style="left:580px;top:790px;width:1px;height:13px;background:#000"></div>
<svg style="left:564px;top:789px;" width="20" height="14" viewBox="0 0 20 14"><path d="M2 13l17-12" fill="none" stroke="#000" stroke-width="1.2" /></svg>
<div style="left:543px;top:796px;width:1px;height:118px;background:#000"></div>
<div style="left:418px;top:774px;width:60px;height:14px;line-height:14px;font-size:12.8px;color:#3c3c3c;white-space:nowrap;text-align:center">M2323</div>
<div style="left:481px;top:774px;width:60px;height:14px;line-height:14px;font-size:12.8px;color:#3c3c3c;white-space:nowrap;text-align:center">L224</div>
<div style="left:544px;top:774px;width:60px;height:14px;line-height:14px;font-size:12.8px;color:#3c3c3c;white-space:nowrap;text-align:center">M2325</div>
<div class="cm" style="left:419px;top:827px;height:15px;line-height:15px;font-size:12.8px;color:#0a8a14;white-space:nowrap;">C01_Aut</div>
<div class="cm" style="left:419px;top:842px;height:15px;line-height:15px;font-size:12.8px;color:#0a8a14;white-space:nowrap;">o Wait</div>
<div class="cm" style="left:419px;top:857px;height:15px;line-height:15px;font-size:12.8px;color:#0a8a14;white-space:nowrap;">RB2</div>
<div class="cm" style="left:482px;top:827px;height:15px;line-height:15px;font-size:12.8px;color:#0a8a14;white-space:nowrap;">RB2工作</div>
<div class="cm" style="left:482px;top:842px;height:15px;line-height:15px;font-size:12.8px;color:#0a8a14;white-space:nowrap;">忙碌</div>
<div class="cm" style="left:545px;top:827px;height:15px;line-height:15px;font-size:12.8px;color:#0a8a14;white-space:nowrap;">C01_Aut</div>
<div class="cm" style="left:545px;top:842px;height:15px;line-height:15px;font-size:12.8px;color:#0a8a14;white-space:nowrap;">o RB2</div>
<div class="cm" style="left:545px;top:857px;height:15px;line-height:15px;font-size:12.8px;color:#0a8a14;white-space:nowrap;">Finish</div>
<div style="left:390px;top:816px;width:24px;height:14px;line-height:14px;font-size:12.8px;color:#222;white-space:nowrap;text-align:right">(21</div>
<div style="left:390px;top:830px;width:24px;height:14px;line-height:14px;font-size:12.8px;color:#222;white-space:nowrap;text-align:right">08)</div>
<div style="left:417px;top:679px;width:25px;height:1px;background:#000"></div>
<div style="left:455px;top:679px;width:278px;height:1px;background:#000"></div>
<div style="left:442px;top:673px;width:1px;height:13px;background:#000"></div>
<div style="left:454px;top:673px;width:1px;height:13px;background:#000"></div>
<div style="left:732px;top:670px;width:1px;height:10px;background:#000"></div>
<div class="cm" style="left:419px;top:710px;height:15px;line-height:15px;font-size:12.8px;color:#0a8a14;white-space:nowrap;">C01_Aut</div>
<div class="cm" style="left:419px;top:725px;height:15px;line-height:15px;font-size:12.8px;color:#0a8a14;white-space:nowrap;">o Wait</div>
<div class="cm" style="left:419px;top:740px;height:15px;line-height:15px;font-size:12.8px;color:#0a8a14;white-space:nowrap;">RB2</div>
<div style="left:417px;top:913px;width:25px;height:1px;background:#000"></div>
<div style="left:455px;top:913px;width:89px;height:1px;background:#000"></div>
<div style="left:442px;top:907px;width:1px;height:13px;background:#000"></div>
<div style="left:454px;top:907px;width:1px;height:13px;background:#000"></div>
<div style="left:418px;top:891px;width:60px;height:14px;line-height:14px;font-size:12.8px;color:#3c3c3c;white-space:nowrap;text-align:center">M2324</div>
<div style="left:1597px;top:148px;width:19px;height:778px;background:#f0f0f0"></div>
<div style="left:1597px;top:148px;width:19px;height:8px;background:#a8a8a8"></div>
<svg style="left:1601px;top:163px;" width="11" height="7" viewBox="0 0 11 7"><path d="M1 6l4.500-4.500l4.500 4.500" fill="none" stroke="#505050" stroke-width="1.8" /></svg>
<svg style="left:1601px;top:911px;" width="11" height="7" viewBox="0 0 11 7"><path d="M1 1l4.500 4.500l4.500-4.500" fill="none" stroke="#505050" stroke-width="1.8" /></svg>
<div style="left:1597px;top:834px;width:19px;height:22px;background:#c9c9c9"></div>
<div style="left:318px;top:926px;width:1298px;height:23px;background:#f0f0f0"></div>
<svg style="left:322px;top:932px;" width="7" height="11" viewBox="0 0 7 11"><path d="M6 1l-4.500 4.500l4.500 4.500" fill="none" stroke="#b8b8b8" stroke-width="1.8" /></svg>
<svg style="left:1575px;top:932px;" width="7" height="11" viewBox="0 0 7 11"><path d="M1 1l4.500 4.500l-4.500 4.500" fill="none" stroke="#b8b8b8" stroke-width="1.8" /></svg>
<div style="left:1589px;top:928px;width:7px;height:19px;background:#a8a8a8"></div>
<div style="left:1627px;top:116px;width:293px;height:26px;background:linear-gradient(#4f628a,#43557a);border-radius:3px 0 0 0"></div>
<div style="left:1631px;top:121px;height:20px;line-height:20px;font-size:15px;color:#fff;white-space:nowrap;">搜索与替换</div>
<svg style="left:1909px;top:123px;" width="8" height="14" viewBox="0 0 8 14"><path d="M2 1h4v6h-4zM0.500 7.500h7M4 7.500v6" fill="none" stroke="#fff" stroke-width="1.1" /><rect x="4.6" y="1" width="1.4" height="6" fill="#fff" /></svg>
<div style="left:1627px;top:142px;width:293px;height:96px;background:#2e3f61"></div>
<div style="left:1629px;top:143px;width:291px;height:95px;background:#bac6da;border-radius:4px 0 0 4px;border-left:1px solid #d3dcea;border-top:1px solid #d3dcea"></div>
<svg style="left:1635px;top:148px;" width="20" height="19" viewBox="0 0 20 19"><rect x="0" y="0" width="19" height="8" fill="#1e73e8" /><text x="0.5" y="6.5" font-family="Liberation Sans,sans-serif" font-size="8.5" fill="#fff" font-weight="bold" textLength="18" lengthAdjust="spacingAndGlyphs">Dev</text><rect x="0" y="8" width="8" height="4" fill="#1e73e8" /><rect x="9" y="10" width="3.6" height="7" fill="#111" /><rect x="14.4" y="10" width="3.6" height="7" fill="#111" /><rect x="10" y="8" width="2" height="3" fill="#111" /><rect x="15" y="8" width="2" height="3" fill="#111" /><rect x="12" y="11" width="3" height="2.5" fill="#111" /></svg>
<div class="rp1" style="left:1654px;top:148px;height:20px;line-height:20px;font-size:15px;color:#1c2846;white-space:nowrap;">软元件/标签搜索(E)</div>
<svg style="left:1785px;top:157px;" width="6" height="4" viewBox="0 0 6 4"><path d="M0 0h6l-3 3.500z" fill="#1c2846" stroke="none" stroke-width="1" /></svg>
<div style="left:1634px;top:173px;width:286px;height:1px;background:#98a6c0"></div>
<div style="left:1634px;top:174px;width:286px;height:1px;background:#e6ecf5"></div>
<div style="left:1632px;top:177px;width:198px;height:25px;background:#fff"></div>
<div style="left:1635px;top:180px;height:20px;line-height:20px;font-size:15px;color:#000;white-space:nowrap;">(全工程)</div>
<div style="left:1815px;top:178px;width:14px;height:23px;background:#b9c6db"></div>
<svg style="left:1818px;top:187px;" width="8" height="5" viewBox="0 0 8 5"><path d="M0 0h8l-4 4.600z" fill="#1c2846" stroke="none" stroke-width="1" /></svg>
<svg style="left:1832px;top:180px;" width="21" height="19" viewBox="0 0 21 19"><path d="M0.500 5h6l1.500-1.500h11.500v14h-19z" fill="#f2c24a" stroke="#a87a10" stroke-width="0.8" /><rect x="4" y="0" width="11" height="9" fill="#333" /><rect x="6" y="1.5" width="3" height="1.5" fill="#3c3" /><rect x="5" y="4" width="6" height="1.2" fill="#999" /><rect x="5" y="6.5" width="6" height="1.2" fill="#999" /><rect x="11" y="2" width="3.5" height="8" fill="#eee" /><path d="M9 16l8-10" fill="none" stroke="#1848c8" stroke-width="2.4" /><circle cx="17.5" cy="5.5" r="2" fill="none" stroke="#1848c8" stroke-width="1.4"/></svg>
<div style="left:1634px;top:206px;width:286px;height:1px;background:#98a6c0"></div>
<div style="left:1634px;top:207px;width:286px;height:1px;background:#e6ecf5"></div>
<div class="rp1" style="left:1636px;top:213px;height:20px;line-height:20px;font-size:15px;color:#1c2846;white-space:nowrap;">搜索对象(B)</div>
<svg style="left:1719px;top:222px;" width="6" height="4" viewBox="0 0 6 4"><path d="M0 0h6l-3 3.500z" fill="#1c2846" stroke="none" stroke-width="1" /></svg>
<div style="left:1628px;top:238px;width:292px;height:693px;background:#f0f0f0;border-top:1px solid #6e6e6e;border-left:1px solid #8a8a8a"></div>
<div class="sf rp2" style="left:1639px;top:255px;height:22px;line-height:22px;font-size:18px;color:#1c1c1c;white-space:nowrap;">搜索软元件<span class="h" style="width:9.0px">/</span>标签<span class="h" style="width:9.0px">(</span><span class="h" style="width:9.0px">N</span><span class="h" style="width:9.0px">)</span></div>
<div style="left:1839px;top:253px;width:90px;height:26px;background:#fff;border:1px solid #7a7a7a"></div>
<svg style="left:1912px;top:263px;" width="10" height="6" viewBox="0 0 10 6"><path d="M0.500 0.500l4.500 4.500l4.500-4.500" fill="none" stroke="#444" stroke-width="1.2" /></svg>
<div style="left:1640px;top:301px;width:130px;height:39px;background:#cccccc;border:1px solid #bfbfbf"></div>
<div class="sf" style="left:1640px;top:309px;width:130px;height:22px;line-height:22px;font-size:18px;color:#a3a3a3;white-space:nowrap;text-align:center">搜索下一个<span class="h" style="width:9.0px">(</span><span class="h" style="width:9.0px">F</span><span class="h" style="width:9.0px">)</span></div>
<div style="left:1778px;top:301px;width:130px;height:39px;background:#cccccc;border:1px solid #bfbfbf"></div>
<div class="sf" style="left:1778px;top:309px;width:130px;height:22px;line-height:22px;font-size:18px;color:#a3a3a3;white-space:nowrap;text-align:center">全部搜索<span class="h" style="width:9.0px">(</span><span class="h" style="width:9.0px">L</span><span class="h" style="width:9.0px">)</span></div>
<div style="left:1645px;top:345px;width:290px;height:353px;border:1px solid #a8a8a8;box-shadow:inset 1px 1px 0 #fff"></div>
<div class="rp1" style="left:1648px;top:347px;height:20px;line-height:20px;font-size:15px;color:#0a2fb8;white-space:nowrap;text-decoration:underline">- 搜索/替换选项(P)</div>
<div class="sf" style="left:1650px;top:386px;height:22px;line-height:22px;font-size:18px;color:#1c1c1c;white-space:nowrap;">搜索</div>
<div style="left:1719px;top:397px;width:201px;height:1px;background:#a0a0a0"></div>
<div class="sf rp2" style="left:1650px;top:420px;height:22px;line-height:22px;font-size:18px;color:#1c1c1c;white-space:nowrap;">搜索方向<span class="h" style="width:9.0px">(</span><span class="h" style="width:9.0px">T</span><span class="h" style="width:9.0px">)</span></div>
<div style="left:1789px;top:413px;width:140px;height:27px;background:#e1e1e1;border:1px solid #adadad"></div>
<div class="sf" style="left:1793px;top:415px;height:22px;line-height:22px;font-size:18px;color:#1c1c1c;white-space:nowrap;">向下</div>
<div class="sf rp2" style="left:1650px;top:465px;height:22px;line-height:22px;font-size:18px;color:#1c1c1c;white-space:nowrap;">软元件点数<span class="h" style="width:9.0px">(</span><span class="h" style="width:9.0px">D</span><span class="h" style="width:9.0px">)</span></div>
<div style="left:1789px;top:460px;width:64px;height:34px;background:#fff;border:1px solid #7a7a7a"></div>
<div class="sf" style="left:1794px;top:462px;height:22px;line-height:22px;font-size:18px;color:#1c1c1c;white-space:nowrap;"><span class="h" style="width:9.0px">1</span></div>
<div style="left:1856px;top:459px;width:19px;height:17px;background:#f0f0f0;border:1px solid #acacac"></div>
<div style="left:1856px;top:476px;width:19px;height:17px;background:#f0f0f0;border:1px solid #acacac"></div>
<svg style="left:1862px;top:465px;" width="7" height="4" viewBox="0 0 7 4"><path d="M0 4h7l-3.500-4z" fill="#1c1c1c" stroke="none" stroke-width="1" /></svg>
<svg style="left:1862px;top:483px;" width="7" height="4" viewBox="0 0 7 4"><path d="M0 0h7l-3.500 4z" fill="#1c1c1c" stroke="none" stroke-width="1" /></svg>
<div style="left:1877px;top:460px;width:60px;height:27px;background:#e1e1e1;border:1px solid #adadad"></div>
<div class="sf" style="left:1881px;top:462px;height:22px;line-height:22px;font-size:18px;color:#1c1c1c;white-space:nowrap;"><span class="h" style="width:9.0px">1</span><span class="h" style="width:9.0px">0</span>进制</div>
<div style="left:1649px;top:510px;width:16px;height:16px;background:#fff;border:1px solid #333"></div>
<div class="sf rp2" style="left:1668px;top:507px;height:22px;line-height:22px;font-size:18px;color:#1c1c1c;white-space:nowrap;">数位<span class="h" style="width:9.0px">(</span><span class="h" style="width:9.0px">I</span><span class="h" style="width:9.0px">)</span></div>
<div style="left:1649px;top:544px;width:16px;height:16px;background:#fff;border:1px solid #333"></div>
<div class="sf rp2" style="left:1668px;top:541px;height:22px;line-height:22px;font-size:18px;color:#1c1c1c;white-space:nowrap;">多个字<span class="h" style="width:9.0px">(</span><span class="h" style="width:9.0px">W</span><span class="h" style="width:9.0px">)</span></div>
<div style="left:1649px;top:582px;width:16px;height:16px;background:#fff;border:1px solid #333"></div>
<div class="sf rp2" style="left:1668px;top:579px;height:22px;line-height:22px;font-size:18px;color:#1c1c1c;white-space:nowrap;"><span class="h" style="width:9.0px">F</span><span class="h" style="width:9.0px">B</span><span class="h" style="width:9.0px">/</span>结构体的元素中部分一致<span class="h" style="width:9.0px">(</span><span class="h" style="width:9.0px">U</span><span class="h" style="width:9.0px">)</span></div>
<div class="sf" style="left:1650px;top:622px;height:22px;line-height:22px;font-size:18px;color:#9a9a9a;white-space:nowrap;">替换</div>
<div style="left:1737px;top:633px;width:183px;height:1px;background:#a0a0a0"></div>
<div class="sf rp2" style="left:1650px;top:651px;height:22px;line-height:22px;font-size:18px;color:#9a9a9a;white-space:nowrap;">软元件注释<span class="h" style="width:9.0px">(</span><span class="h" style="width:9.0px">E</span><span class="h" style="width:9.0px">)</span></div>
<div style="left:1811px;top:649px;width:120px;height:27px;background:#c9c9c9"></div>
<div class="sf" style="left:1816px;top:651px;height:22px;line-height:22px;font-size:18px;color:#1c1c1c;white-space:nowrap;">不更改</div>
<div style="left:1628px;top:931px;width:292px;height:23px;background:#f0f0f0;border-top:1px solid #fff"></div>
<svg style="left:1635px;top:936px;" width="7" height="11" viewBox="0 0 7 11"><path d="M6 1l-4.500 4.500l4.500 4.500" fill="none" stroke="#505050" stroke-width="1.8" /></svg>
<div style="left:1650px;top:933px;width:204px;height:19px;background:#cdcdcd"></div>
<div style="left:322px;top:162px;width:562px;height:509px;background:#f0f0f0;border:1px solid #5e5e5e;box-shadow:3px 4px 14px 1px rgba(0,0,0,.36)"></div>
<div style="left:323px;top:163px;width:560px;height:37px;background:#fff"></div>
<div style="left:332px;top:171px;height:20px;line-height:20px;font-size:15px;color:#000;white-space:nowrap;">块口令设置</div>
<svg style="left:856px;top:175px;" width="13" height="13" viewBox="0 0 13 13"><path d="M0.500 0.500l12 12M12.500 0.500l-12 12" fill="none" stroke="#111" stroke-width="1.1" /></svg>
<div class="sf dl" style="left:334px;top:230px;height:20px;line-height:20px;font-size:16px;color:#000;white-space:nowrap;">登录、更改、认证或删除程序部件的口令。</div>
<div style="left:325px;top:264px;width:557px;height:1px;background:#a0a0a0"></div>
<div style="left:325px;top:265px;width:557px;height:1px;background:#fff"></div>
<div class="sf dl" style="left:334px;top:281px;height:20px;line-height:20px;font-size:16px;color:#000;white-space:nowrap;">程序部件一览<span class="h" style="width:8.0px">:</span></div>
<div style="left:335px;top:310px;width:536px;height:270px;background:#fff;border:1px solid #828790"></div>
<div style="left:336px;top:311px;width:534px;height:25px;background:linear-gradient(#f7fbff 0%,#e3effd 50%,#c6ddfb 100%);border-bottom:2px solid #1a1a1a"></div>
<div class="sf dl" style="left:339px;top:312px;height:20px;line-height:20px;font-size:15px;color:#000;white-space:nowrap;">数据名</div>
<svg style="left:398px;top:319px;" width="9" height="5" viewBox="0 0 9 5"><path d="M0 5l4.500-5l4.500 5z" fill="#9cc0f0" stroke="none" stroke-width="1" /></svg>
<div style="left:613px;top:313px;width:1px;height:18px;background:#9cbcec"></div>
<div class="sf dl" style="left:617px;top:312px;height:20px;line-height:20px;font-size:15px;color:#000;white-space:nowrap;">登录状态</div>
<div style="left:771px;top:313px;width:1px;height:18px;background:#9cbcec"></div>
<div style="left:336px;top:336px;width:277px;height:21px;background:#f4f4f4"></div>
<div style="left:614px;top:336px;width:157px;height:21px;background:#fff"></div>
<div style="left:336px;top:356px;width:436px;height:1px;background:#6c9ee2"></div>
<svg style="left:337px;top:339px;" width="16" height="16" viewBox="0 0 16 16"><path d="M0.500 5h4l1 1.500h2v8.500h-7z" fill="#f3c95a" stroke="#a87a10" stroke-width="0.8" /><path d="M3 1h8l3.500 3.500v9.500h-11.500z" fill="#fff" stroke="#8f96a8" stroke-width="0.9" /><path d="M11 1v3.500h3.500" fill="#dfe4ee" stroke="#8f96a8" stroke-width="0.7" /><rect x="3.5" y="11" width="10.5" height="2.7" fill="#d5dcea" /><path d="M4.699999999999999 7.5h3.1M9.6 7.5h3.1M7.149999999999999 5.0v5M10.25 5.0v5" fill="none" stroke="#e81010" stroke-width="1.3" /><path d="M0.500 14.500l1.200-2.500h2v2.500z" fill="#e9b63c" stroke="#a87a10" stroke-width="0.5" /><path d="M1 14.800h13" fill="none" stroke="#b08a30" stroke-width="1" /></svg>
<div class="sf dl" style="left:355px;top:335px;height:20px;line-height:20px;font-size:15px;color:#000;white-space:nowrap;">交握</div>
<div style="left:336px;top:357px;width:277px;height:21px;background:#f4f4f4"></div>
<div style="left:614px;top:357px;width:157px;height:21px;background:#e6eafb"></div>
<div style="left:336px;top:377px;width:436px;height:1px;background:#6c9ee2"></div>
<svg style="left:337px;top:360px;" width="16" height="16" viewBox="0 0 16 16"><path d="M0.500 5h4l1 1.500h2v8.500h-7z" fill="#f3c95a" stroke="#a87a10" stroke-width="0.8" /><path d="M3 1h8l3.500 3.500v9.500h-11.500z" fill="#fff" stroke="#8f96a8" stroke-width="0.9" /><path d="M11 1v3.500h3.500" fill="#dfe4ee" stroke="#8f96a8" stroke-width="0.7" /><rect x="3.5" y="11" width="10.5" height="2.7" fill="#d5dcea" /><path d="M4.699999999999999 7.5h3.1M9.6 7.5h3.1M7.149999999999999 5.0v5M10.25 5.0v5" fill="none" stroke="#e81010" stroke-width="1.3" /><path d="M0.500 14.500l1.200-2.500h2v2.500z" fill="#e9b63c" stroke="#a87a10" stroke-width="0.5" /><path d="M1 14.800h13" fill="none" stroke="#b08a30" stroke-width="1" /></svg>
<div class="sf dl" style="left:355px;top:356px;height:20px;line-height:20px;font-size:15px;color:#000;white-space:nowrap;">伺服</div>
<div style="left:336px;top:378px;width:277px;height:21px;background:#f4f4f4"></div>
<div style="left:614px;top:378px;width:157px;height:21px;background:#fff"></div>
<div style="left:336px;top:398px;width:436px;height:1px;background:#6c9ee2"></div>
<svg style="left:337px;top:381px;" width="16" height="16" viewBox="0 0 16 16"><path d="M0.500 5h4l1 1.500h2v8.500h-7z" fill="#f3c95a" stroke="#a87a10" stroke-width="0.8" /><path d="M3 1h8l3.500 3.500v9.500h-11.500z" fill="#fff" stroke="#8f96a8" stroke-width="0.9" /><path d="M11 1v3.500h3.500" fill="#dfe4ee" stroke="#8f96a8" stroke-width="0.7" /><rect x="3.5" y="11" width="10.5" height="2.7" fill="#d5dcea" /><path d="M4.699999999999999 7.5h3.1M9.6 7.5h3.1M7.149999999999999 5.0v5M10.25 5.0v5" fill="none" stroke="#e81010" stroke-width="1.3" /><path d="M0.500 14.500l1.200-2.500h2v2.500z" fill="#e9b63c" stroke="#a87a10" stroke-width="0.5" /><path d="M1 14.800h13" fill="none" stroke="#b08a30" stroke-width="1" /></svg>
<div class="sf dl" style="left:355px;top:377px;height:20px;line-height:20px;font-size:15px;color:#000;white-space:nowrap;">备</div>
<div style="left:336px;top:399px;width:277px;height:21px;background:#f4f4f4"></div>
<div style="left:614px;top:399px;width:157px;height:21px;background:#e6eafb"></div>
<div style="left:336px;top:419px;width:436px;height:1px;background:#6c9ee2"></div>
<svg style="left:337px;top:402px;" width="16" height="16" viewBox="0 0 16 16"><path d="M0.500 5h4l1 1.500h2v8.500h-7z" fill="#f3c95a" stroke="#a87a10" stroke-width="0.8" /><path d="M3 1h8l3.500 3.500v9.500h-11.500z" fill="#fff" stroke="#8f96a8" stroke-width="0.9" /><path d="M11 1v3.500h3.500" fill="#dfe4ee" stroke="#8f96a8" stroke-width="0.7" /><rect x="3.5" y="11" width="10.5" height="2.7" fill="#d5dcea" /><path d="M4.699999999999999 7.5h3.1M9.6 7.5h3.1M7.149999999999999 5.0v5M10.25 5.0v5" fill="none" stroke="#e81010" stroke-width="1.3" /><path d="M0.500 14.500l1.200-2.500h2v2.500z" fill="#e9b63c" stroke="#a87a10" stroke-width="0.5" /><path d="M1 14.800h13" fill="none" stroke="#b08a30" stroke-width="1" /></svg>
<div class="sf dl" style="left:355px;top:398px;height:20px;line-height:20px;font-size:15px;color:#000;white-space:nowrap;">备用</div>
<div style="left:336px;top:420px;width:277px;height:21px;background:#f4f4f4"></div>
<div style="left:614px;top:420px;width:157px;height:21px;background:#fff"></div>
<div style="left:336px;top:440px;width:436px;height:1px;background:#6c9ee2"></div>
<svg style="left:337px;top:423px;" width="16" height="16" viewBox="0 0 16 16"><path d="M0.500 5h4l1 1.500h2v8.500h-7z" fill="#f3c95a" stroke="#a87a10" stroke-width="0.8" /><path d="M3 1h8l3.500 3.500v9.500h-11.500z" fill="#fff" stroke="#8f96a8" stroke-width="0.9" /><path d="M11 1v3.500h3.500" fill="#dfe4ee" stroke="#8f96a8" stroke-width="0.7" /><rect x="3.5" y="11" width="10.5" height="2.7" fill="#d5dcea" /><path d="M4.699999999999999 7.5h3.1M9.6 7.5h3.1M7.149999999999999 5.0v5M10.25 5.0v5" fill="none" stroke="#e81010" stroke-width="1.3" /><path d="M0.500 14.500l1.200-2.500h2v2.500z" fill="#e9b63c" stroke="#a87a10" stroke-width="0.5" /><path d="M1 14.800h13" fill="none" stroke="#b08a30" stroke-width="1" /></svg>
<div class="sf dl" style="left:355px;top:419px;height:20px;line-height:20px;font-size:15px;color:#000;white-space:nowrap;">异常</div>
<div style="left:336px;top:441px;width:436px;height:21px;background:#0078d7"></div>
<div style="left:336px;top:461px;width:436px;height:1px;background:#6c9ee2"></div>
<svg style="left:337px;top:444px;" width="16" height="16" viewBox="0 0 16 16"><path d="M0.500 5h4l1 1.500h2v8.500h-7z" fill="#f3c95a" stroke="#a87a10" stroke-width="0.8" /><path d="M3 1h8l3.500 3.500v9.500h-11.500z" fill="#fff" stroke="#8f96a8" stroke-width="0.9" /><path d="M11 1v3.500h3.500" fill="#dfe4ee" stroke="#8f96a8" stroke-width="0.7" /><rect x="3.5" y="11" width="10.5" height="2.7" fill="#d5dcea" /><path d="M4.699999999999999 7.5h3.1M9.6 7.5h3.1M7.149999999999999 5.0v5M10.25 5.0v5" fill="none" stroke="#e81010" stroke-width="1.3" /><path d="M0.500 14.500l1.200-2.500h2v2.500z" fill="#e9b63c" stroke="#a87a10" stroke-width="0.5" /><path d="M1 14.800h13" fill="none" stroke="#b08a30" stroke-width="1" /><rect x="8.5" y="11" width="7" height="5" fill="#2a2a2a" /><path d="M10.0 11v-1.5a2 2 0 0 1 4 0v1.5" fill="none" stroke="#2a2a2a" stroke-width="1.3" /><rect x="11.5" y="12.5" width="1.2" height="2" fill="#ddd" /></svg>
<div class="sf dl" style="left:355px;top:440px;height:20px;line-height:20px;font-size:15px;color:#fff;white-space:nowrap;">系统</div>
<svg style="left:618px;top:447px;" width="11" height="10" viewBox="0 0 11 10"><rect x="0" y="4" width="11" height="6" fill="#f0b020" stroke="#a87000" stroke-width="0.600"/><path d="M2.500 4v-1.500a3 3 0 0 1 6 0v1.500" fill="none" stroke="#f4d070" stroke-width="1.5" /><rect x="1" y="6" width="9" height="1" fill="#fff2b0" /></svg>
<div class="sf dl" style="left:633px;top:440px;height:20px;line-height:20px;font-size:15px;color:#fff;white-space:nowrap;">已登录</div>
<div style="left:336px;top:462px;width:277px;height:21px;background:#f4f4f4"></div>
<div style="left:614px;top:462px;width:157px;height:21px;background:#fff"></div>
<div style="left:336px;top:482px;width:436px;height:1px;background:#6c9ee2"></div>
<svg style="left:337px;top:465px;" width="16" height="16" viewBox="0 0 16 16"><path d="M0.500 5h4l1 1.500h2v8.500h-7z" fill="#f3c95a" stroke="#a87a10" stroke-width="0.8" /><path d="M3 1h8l3.500 3.500v9.500h-11.500z" fill="#fff" stroke="#8f96a8" stroke-width="0.9" /><path d="M11 1v3.500h3.500" fill="#dfe4ee" stroke="#8f96a8" stroke-width="0.7" /><rect x="3.5" y="11" width="10.5" height="2.7" fill="#d5dcea" /><path d="M4.699999999999999 7.5h3.1M9.6 7.5h3.1M7.149999999999999 5.0v5M10.25 5.0v5" fill="none" stroke="#e81010" stroke-width="1.3" /><path d="M0.500 14.500l1.200-2.500h2v2.500z" fill="#e9b63c" stroke="#a87a10" stroke-width="0.5" /><path d="M1 14.800h13" fill="none" stroke="#b08a30" stroke-width="1" /></svg>
<div class="sf dl" style="left:355px;top:461px;height:20px;line-height:20px;font-size:15px;color:#000;white-space:nowrap;">自动</div>
<div style="left:336px;top:483px;width:277px;height:21px;background:#f4f4f4"></div>
<div style="left:614px;top:483px;width:157px;height:21px;background:#e6eafb"></div>
<div style="left:336px;top:503px;width:436px;height:1px;background:#6c9ee2"></div>
<svg style="left:337px;top:486px;" width="16" height="16" viewBox="0 0 16 16"><path d="M0.500 5h4l1 1.500h2v8.500h-7z" fill="#f3c95a" stroke="#a87a10" stroke-width="0.8" /><path d="M3 1h8l3.500 3.500v9.500h-11.500z" fill="#fff" stroke="#8f96a8" stroke-width="0.9" /><path d="M11 1v3.500h3.500" fill="#dfe4ee" stroke="#8f96a8" stroke-width="0.7" /><rect x="3.5" y="11" width="10.5" height="2.7" fill="#d5dcea" /><path d="M4.699999999999999 7.5h3.1M9.6 7.5h3.1M7.149999999999999 5.0v5M10.25 5.0v5" fill="none" stroke="#e81010" stroke-width="1.3" /><path d="M0.500 14.500l1.200-2.500h2v2.500z" fill="#e9b63c" stroke="#a87a10" stroke-width="0.5" /><path d="M1 14.800h13" fill="none" stroke="#b08a30" stroke-width="1" /></svg>
<div class="sf dl" style="left:355px;top:482px;height:20px;line-height:20px;font-size:15px;color:#000;white-space:nowrap;">表单</div>
<div style="left:336px;top:504px;width:277px;height:21px;background:#f4f4f4"></div>
<div style="left:614px;top:504px;width:157px;height:21px;background:#fff"></div>
<div style="left:336px;top:524px;width:436px;height:1px;background:#6c9ee2"></div>
<svg style="left:337px;top:507px;" width="16" height="16" viewBox="0 0 16 16"><path d="M0.500 5h4l1 1.500h2v8.500h-7z" fill="#f3c95a" stroke="#a87a10" stroke-width="0.8" /><path d="M3 1h8l3.500 3.500v9.500h-11.500z" fill="#fff" stroke="#8f96a8" stroke-width="0.9" /><path d="M11 1v3.500h3.500" fill="#dfe4ee" stroke="#8f96a8" stroke-width="0.7" /><rect x="3.5" y="11" width="10.5" height="2.7" fill="#d5dcea" /><path d="M4.699999999999999 7.5h3.1M9.6 7.5h3.1M7.149999999999999 5.0v5M10.25 5.0v5" fill="none" stroke="#e81010" stroke-width="1.3" /><path d="M0.500 14.500l1.200-2.500h2v2.500z" fill="#e9b63c" stroke="#a87a10" stroke-width="0.5" /><path d="M1 14.800h13" fill="none" stroke="#b08a30" stroke-width="1" /></svg>
<div class="sf dl" style="left:355px;top:503px;height:20px;line-height:20px;font-size:15px;color:#000;white-space:nowrap;">输出</div>
<div style="left:613px;top:336px;width:1px;height:189px;background:#6c9ee2"></div>
<div style="left:771px;top:336px;width:1px;height:189px;background:#6c9ee2"></div>
<div style="left:377px;top:593px;width:115px;height:26px;background:#cccccc;border:1px solid #bfbfbf"></div>
<div class="sf" style="left:377px;top:595px;width:115px;height:21px;line-height:21px;font-size:16px;color:#a0a0a0;white-space:nowrap;text-align:center">登录<span class="h" style="width:8.0px">(</span><span class="h" style="width:8.0px">R</span><span class="h" style="width:8.0px">)</span><span class="h" style="width:8.0px">.</span><span class="h" style="width:8.0px">.</span><span class="h" style="width:8.0px">.</span></div>
<div style="left:501px;top:593px;width:115px;height:26px;background:#e1e1e1;border:1px solid #adadad"></div>
<div class="sf" style="left:501px;top:595px;width:115px;height:21px;line-height:21px;font-size:16px;color:#000;white-space:nowrap;text-align:center">更改<span class="h" style="width:8.0px">(</span><span class="h" style="width:8.0px">C</span><span class="h" style="width:8.0px">)</span><span class="h" style="width:8.0px">.</span><span class="h" style="width:8.0px">.</span><span class="h" style="width:8.0px">.</span></div>
<div style="left:629px;top:593px;width:115px;height:26px;background:#e1e1e1;border:1px solid #adadad"></div>
<div class="sf" style="left:629px;top:595px;width:115px;height:21px;line-height:21px;font-size:16px;color:#000;white-space:nowrap;text-align:center">认证<span class="h" style="width:8.0px">(</span><span class="h" style="width:8.0px">A</span><span class="h" style="width:8.0px">)</span><span class="h" style="width:8.0px">.</span><span class="h" style="width:8.0px">.</span><span class="h" style="width:8.0px">.</span></div>
<div style="left:755px;top:593px;width:115px;height:26px;background:#e1e1e1;border:1px solid #adadad"></div>
<div class="sf" style="left:755px;top:595px;width:115px;height:21px;line-height:21px;font-size:16px;color:#000;white-space:nowrap;text-align:center">删除<span class="h" style="width:8.0px">(</span><span class="h" style="width:8.0px">D</span><span class="h" style="width:8.0px">)</span><span class="h" style="width:8.0px">.</span><span class="h" style="width:8.0px">.</span><span class="h" style="width:8.0px">.</span></div>
<div style="left:629px;top:631px;width:115px;height:26px;background:#e1e1e1;border:2px solid #0078d7"></div>
<div class="sf" style="left:629px;top:633px;width:115px;height:21px;line-height:21px;font-size:16px;color:#000;white-space:nowrap;text-align:center">确定</div>
<div style="left:755px;top:631px;width:115px;height:26px;background:#e1e1e1;border:1px solid #adadad"></div>
<div class="sf" style="left:755px;top:633px;width:115px;height:21px;line-height:21px;font-size:16px;color:#000;white-space:nowrap;text-align:center">取消</div>
<div style="left:876px;top:656px;width:3px;height:3px;background:#bfbfbf"></div>
<div style="left:872px;top:660px;width:3px;height:3px;background:#bfbfbf"></div>
<div style="left:876px;top:660px;width:3px;height:3px;background:#bfbfbf"></div>
<div style="left:868px;top:664px;width:3px;height:3px;background:#bfbfbf"></div>
<div style="left:872px;top:664px;width:3px;height:3px;background:#bfbfbf"></div>
<div style="left:876px;top:664px;width:3px;height:3px;background:#bfbfbf"></div>
<div style="left:45px;top:954px;width:1875px;height:26px;background:#2e3f61"></div>
<div style="left:45px;top:980px;width:1875px;height:24px;background:#2b3b5c"></div>
<div style="left:46px;top:958px;width:213px;height:22px;background:#495a7f;border-radius:3px"></div>
<svg style="left:49px;top:960px;" width="16" height="17" viewBox="0 0 16 17"><text x="3" y="7" font-family="Liberation Sans,sans-serif" font-size="8.5" fill="#2a3cf0" font-weight="bold" font-family="Liberation Serif,serif">I/o</text><path d="M4 6l-3 4h3l-3.500 5" fill="none" stroke="#ff7a10" stroke-width="1.8" /><path d="M5 10.500l3 0.500l3 4l4-6" fill="none" stroke="#e01010" stroke-width="1.8" /></svg>
<div class="ot" style="left:68px;top:959px;height:20px;line-height:20px;font-size:15px;color:#fff;white-space:nowrap;">电源容量<span style="letter-spacing:.9px"> / I/O</span>点数检查结果</div>
<div style="left:1050px;top:983px;width:1px;height:20px;background:#c9d2e2"></div>
<div style="left:1234px;top:983px;width:1px;height:20px;background:#c9d2e2"></div>
<div style="left:1378px;top:983px;width:1px;height:20px;background:#c9d2e2"></div>
<div style="left:1492px;top:983px;width:1px;height:20px;background:#c9d2e2"></div>
<div style="left:1646px;top:983px;width:1px;height:20px;background:#c9d2e2"></div>
<div style="left:1810px;top:983px;width:1px;height:20px;background:#c9d2e2"></div>
<div style="left:1884px;top:983px;width:1px;height:20px;background:#c9d2e2"></div>
<div class="st" style="left:1385px;top:984px;height:19px;line-height:19px;font-size:15px;color:#fff;white-space:nowrap;">FX5U</div>
<div style="left:1498px;top:984px;height:19px;line-height:19px;font-size:15px;color:#fff;white-space:nowrap;">本站</div>
<div class="st" style="left:1653px;top:984px;height:19px;line-height:19px;font-size:15px;color:#fff;white-space:nowrap;">-/2236步</div>
<div style="left:1816px;top:984px;height:19px;line-height:19px;font-size:15px;color:#fff;white-space:nowrap;">改写</div>
<div style="left:1890px;top:984px;height:19px;line-height:19px;font-size:15px;color:#66738f;white-space:nowrap;">大写</div>
<div style="left:45px;top:1004px;width:1875px;height:50px;background:linear-gradient(90deg,#d6ebda 26.1%,#daeed2 34.9%,#deefc8 48.8%,#e6efae 58.1%,#dcefc4 63.2%,#c6ecec 67.6%,#dcecee 70.7%,#e8e9ef 73.3%,#e9eaf0 100%)"></div>
<div style="left:45px;top:1004px;width:61px;height:50px;background:#e6e8f0"></div>
<svg style="left:65px;top:1019px;" width="21" height="20" viewBox="0 0 21 20"><path d="M0 3l8.500-1.200v7.700h-8.500zM9.500 1.600l11-1.600v9.500h-11zM0 10.500h8.500v7.700l-8.500-1.200zM9.500 10.500h11v9.500l-11-1.600z" fill="#000" stroke="none" stroke-width="1" /></svg>
<div style="left:105px;top:1004px;width:430px;height:49px;background:#fff;border:1px solid #c6c6c6;border-top:none"></div>
<svg style="left:120px;top:1018px;" width="21" height="21" viewBox="0 0 21 21"><circle cx="13" cy="8" r="6" fill="none" stroke="#111" stroke-width="1.5"/><path d="M8.500 12.500l-7.500 7.500" fill="none" stroke="#111" stroke-width="1.6" /></svg>
<div class="sb" style="left:155px;top:1018px;height:24px;line-height:24px;font-size:19px;color:#2b2b2b;white-space:nowrap;">在这里输入你要搜索的内容</div>
<svg style="left:554px;top:1018px;" width="22" height="22" viewBox="0 0 22 22"><circle cx="11" cy="11" r="8.2" fill="none" stroke="#111" stroke-width="2.8"/></svg>
<svg style="left:614px;top:1018px;" width="22" height="22" viewBox="0 0 22 22"><path d="M1 1h12M1 21h12M2 6h10v10h-10zM2 1v3M12 1v3M2 18v3M12 18v3" fill="none" stroke="#111" stroke-width="1.3" /><path d="M19 1v6M19 15v6" fill="none" stroke="#111" stroke-width="1.3" /><rect x="17.5" y="9" width="3" height="3" fill="#111" /></svg>
<svg style="left:674px;top:1016px;" width="30" height="24" viewBox="0 0 30 24"><path d="M1 1h10l2 2h14v4h-26z" fill="#e5a50f" stroke="none" stroke-width="1" /><rect x="1" y="4" width="27" height="19" fill="#ffd767" /><rect x="1" y="12" width="27" height="11" fill="#f7c948" /><path d="M6 23v-8h15v8h-4v-5h-7v5z" fill="#2f8fe8" stroke="none" stroke-width="1" /></svg>
<div style="left:664px;top:1051px;width:51px;height:3px;background:#0a6cd6"></div>
<svg style="left:736px;top:1013px;" width="30" height="32" viewBox="0 0 30 32"><path d="M3 28c-3-7 7-21 24-26c-12 6-22 17-20 26c1 3 5 3 9 1c-5 4-11 4-13-1z" fill="#6fd630" stroke="#f4fbf0" stroke-width="1" /><circle cx="15" cy="16" r="11" fill="#58c626" stroke="#f4fbf0" stroke-width="1.6"/><path d="M8.500 16.500h13a6.500 6.500 0 1 0-2 4.600" fill="none" stroke="#fff" stroke-width="3.4" /><path d="M27 2c-9 3-15 8-19 14" fill="none" stroke="#8ae04a" stroke-width="1.5" /></svg>
<svg style="left:797px;top:1013px;" width="31" height="31" viewBox="0 0 31 31"><circle cx="15.5" cy="15.5" r="15" fill="#1c75d8" stroke="none" stroke-width="1"/><path d="M1 16a14.500 14.500 0 0 1 29-2c0 5-4 7-8 7c-4 0-3-4-3-4c2-4-2-7-6-7c-6 0-11 4-12 6z" fill="#38c6e8" stroke="none" stroke-width="1" /><path d="M18 2a14.500 14.500 0 0 1 12 12c0 5-4 7-8 7c-3 0-3-3-3-4c2-4-2-8-6-8c4-5 5-5 5-7z" fill="#56d86a" stroke="none" stroke-width="1" /><path d="M10 14a8 8 0 0 0 10 15a10 10 0 0 1-8-8c0-3 1-5 3-6c-2-1-4-1-5-1z" fill="#0c4fa8" stroke="none" stroke-width="1" /><circle cx="15.5" cy="19" r="3.5" fill="#e0f0d8" stroke="none" stroke-width="1"/></svg>
<svg style="left:860px;top:1014px;" width="30" height="30" viewBox="0 0 30 30"><path d="M2 17c0-8 8-13 16-13c6 0 9 4 8 9c-1 5-5 4-7 6c-2 2 1 5-3 6c-6 2-14-1-14-8z" fill="#b9d3ea" stroke="#7f9cb8" stroke-width="1" /><circle cx="8" cy="15" r="2" fill="#e04040" stroke="none" stroke-width="1"/><circle cx="12" cy="10" r="2" fill="#f0b030" stroke="none" stroke-width="1"/><circle cx="18" cy="8.5" r="2" fill="#50b850" stroke="none" stroke-width="1"/><circle cx="8.5" cy="20.5" r="2" fill="#4a78e0" stroke="none" stroke-width="1"/><path d="M15 26l9-19l2 1l-8 19z" fill="#c87830" stroke="none" stroke-width="1" /><path d="M24 7l3-6l2 2l-3 5z" fill="#9a6a3a" stroke="none" stroke-width="1" /></svg>
<div style="left:850px;top:1051px;width:51px;height:3px;background:#0a6cd6"></div>
<div style="left:907px;top:1004px;width:61px;height:50px;background:rgba(255,255,255,.55)"></div>
<svg style="left:922px;top:1014px;" width="30" height="30" viewBox="0 0 30 30"><rect x="0.5" y="0.5" width="29" height="29" fill="#e81c24" rx="3" stroke="#b01018"/><path d="M0.500 3.500a3 3 0 0 1 3-3h23a3 3 0 0 1 3 3v6l-29 9z" fill="#ff5a5a" stroke="none" stroke-width="0" opacity="0.550"/><path d="M3 11h12M9 11v13h-4M17 7v17M17 9h9M17 15h9v9h-9M17 19.500h9" fill="none" stroke="#fff" stroke-width="2.2" /></svg>
<div style="left:907px;top:1051px;width:61px;height:3px;background:#0a6cd6"></div>
<div class="tr" style="left:1497px;top:1010px;width:80px;height:20px;line-height:20px;font-size:15px;color:#111;white-space:nowrap;text-align:center">0%</div>
<div class="tr" style="left:1497px;top:1030px;width:80px;height:20px;line-height:20px;font-size:15px;color:#111;white-space:nowrap;text-align:center">GPU负载</div>
<svg style="left:1590px;top:1022px;" width="16" height="10" viewBox="0 0 16 10"><path d="M1 9l7-7.500l7 7.500" fill="none" stroke="#111" stroke-width="1.5" /></svg>
<svg style="left:1617px;top:1018px;" width="22" height="22" viewBox="0 0 22 22"><circle cx="11" cy="11" r="10" fill="#2fb83a" stroke="none" stroke-width="1"/><path d="M2 9a9.500 9.500 0 0 1 18 0" fill="none" stroke="#ffe030" stroke-width="2.5" /><path d="M3 15a9.500 9.500 0 0 0 16 0" fill="none" stroke="#ffe030" stroke-width="2" /><path d="M7 11h8M11 7v8" fill="none" stroke="#fff" stroke-width="2.2" /></svg>
<svg style="left:1647px;top:1021px;" width="22" height="16" viewBox="0 0 22 16"><rect x="3" y="4" width="16" height="9" fill="none" stroke="#111" stroke-width="1.300"/><rect x="4.5" y="5.5" width="13" height="6" fill="#111" /><rect x="19.5" y="7" width="1.5" height="3" fill="#111" /><path d="M2 0v5M0.500 1.500h3" fill="none" stroke="#111" stroke-width="1.2" /></svg>
<svg style="left:1680px;top:1019px;" width="22" height="20" viewBox="0 0 22 20"><path d="M1.500 19a17.500 17.500 0 0 1 17.500-17.500" fill="none" stroke="#111" stroke-width="1.1" /><path d="M6 19a13 13 0 0 1 13-13" fill="none" stroke="#111" stroke-width="1.1" /><path d="M10.500 19a8.500 8.500 0 0 1 8.500-8.500" fill="none" stroke="#111" stroke-width="1.1" /><path d="M15 19a4 4 0 0 1 4-4" fill="none" stroke="#111" stroke-width="1.1" /><circle cx="16" cy="17.5" r="1.5" fill="#111" stroke="none" stroke-width="1"/></svg>
<svg style="left:1708px;top:1019px;" width="23" height="20" viewBox="0 0 23 20"><path d="M1 7h3.500l4.500-4.500v15l-4.500-4.500h-3.500z" fill="none" stroke="#111" stroke-width="1.2" /><path d="M12 7a4 4 0 0 1 0 6M15 4.500a8 8 0 0 1 0 11M18 2a12 12 0 0 1 0 16" fill="none" stroke="#111" stroke-width="1.1" /></svg>
<svg style="left:1738px;top:1019px;" width="19" height="20" viewBox="0 0 19 20"><path d="M1.500 5h16v9h-16zM4 7.500h11v4h-11zM8.500 0.500v19M10.500 0.500v19" fill="none" stroke="#555" stroke-width="0.8" /></svg>
<svg style="left:1772px;top:1017px;" width="22" height="22" viewBox="0 0 22 22"><path d="M2 3l17-2l2 17l-17 3z" fill="#f0501c" stroke="none" stroke-width="1" /><path d="M15.500 6.500c-4-2-9-1-9 1.500c0 3 9 2 9 5.500c0 2.500-6 3-10 1" fill="none" stroke="#fff" stroke-width="2.4" /></svg>
<div class="tr" style="left:1812px;top:1008px;width:80px;height:20px;line-height:20px;font-size:16px;color:#111;white-space:nowrap;text-align:center">23:17</div>
<div class="tr" style="left:1802px;top:1031px;width:100px;height:20px;line-height:20px;font-size:16px;color:#111;white-space:nowrap;text-align:center">2021/8/19</div>
<div style="left:1914px;top:1020px;width:6px;height:18px;background:#111"></div>
</body></html>
